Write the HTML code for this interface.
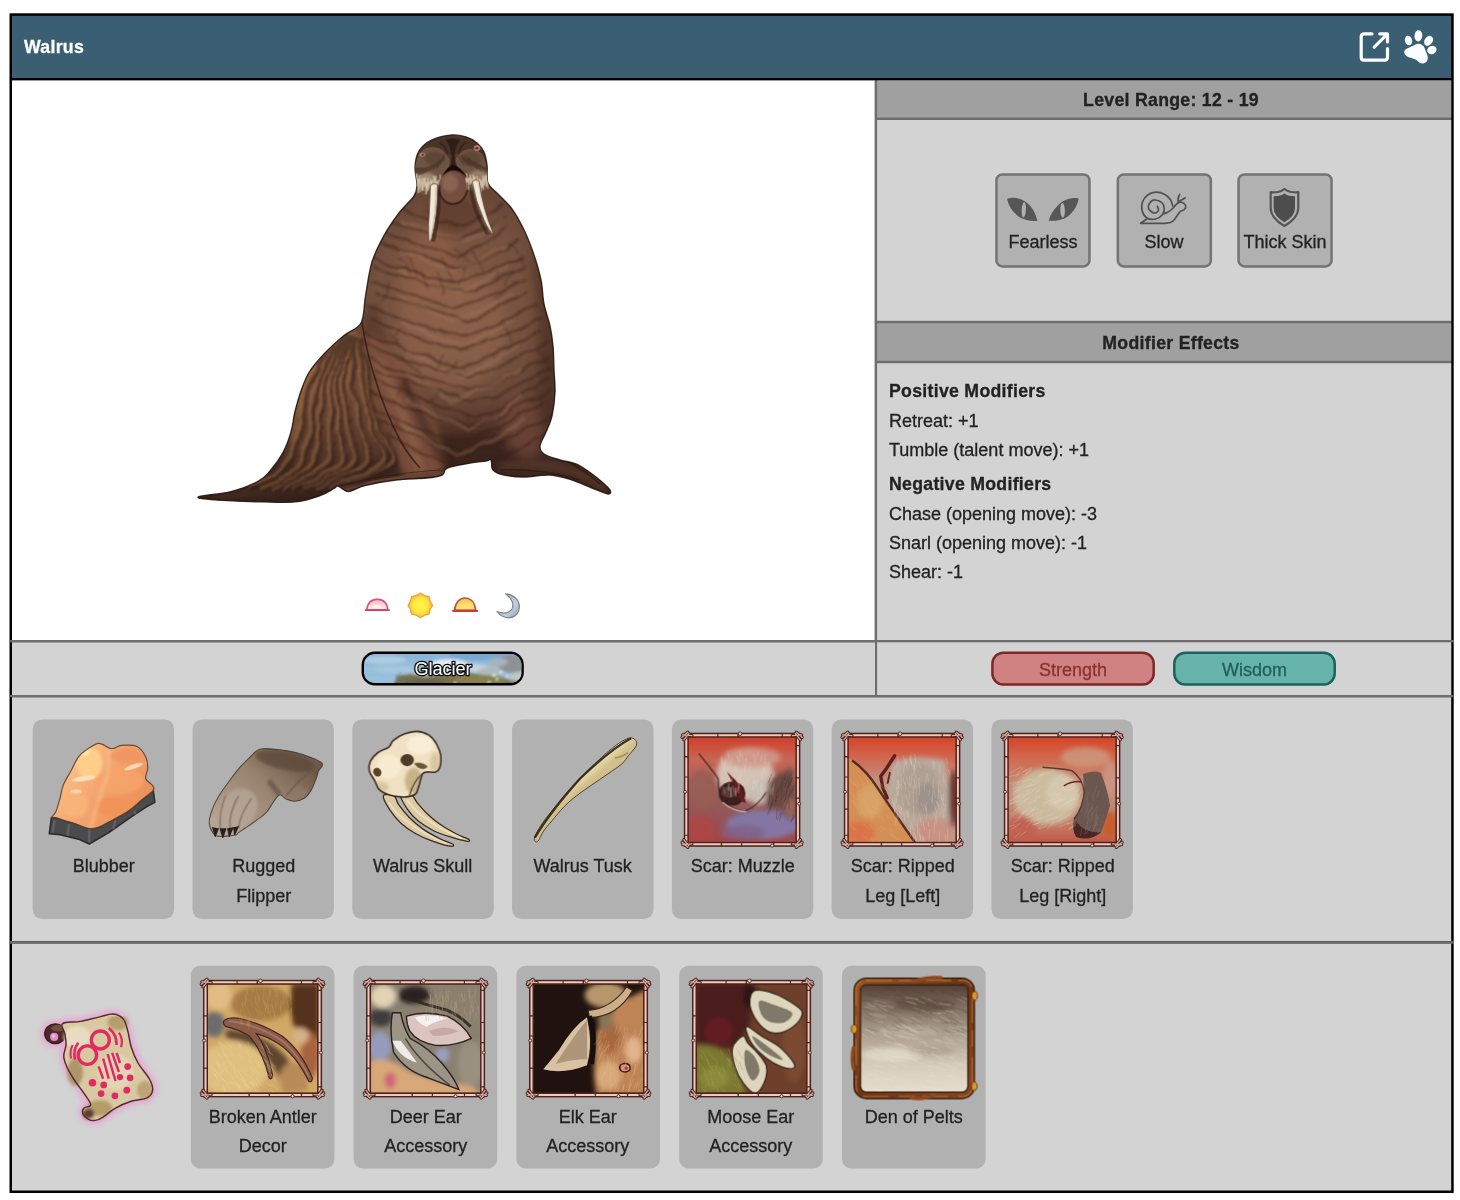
<!DOCTYPE html>
<html>
<head>
<meta charset="utf-8">
<title>Walrus</title>
<style>
html,body{margin:0;padding:0;background:#fff;}
body{width:1460px;height:1200px;position:relative;overflow:hidden;font-family:"Liberation Sans",sans-serif;color:#222;}
#bg{position:absolute;left:0;top:0;width:1460px;height:1200px;}
.t{-webkit-text-stroke:0.3px;will-change:transform;position:absolute;white-space:nowrap;font-size:18px;line-height:22px;margin-top:0.6px;}
.c{text-align:center;}
.b{font-weight:bold;letter-spacing:0.29px;margin-top:0;}
.lbl{-webkit-text-stroke:0.3px;will-change:transform;position:absolute;font-size:18px;line-height:29.5px;text-align:center;color:#222;}
</style>
</head>
<body>
<svg id="bg" width="1460" height="1200" viewBox="0 0 1460 1200">
<defs>
</defs>
<!-- STRUCTURE -->
<rect x="9.5" y="13.3" width="1444.2" height="1179.7" fill="#000"/>
<rect x="12" y="15.8" width="1439.2" height="62.2" fill="#3a5f72"/>
<rect x="12" y="80.4" width="863" height="559.6" fill="#fff"/>
<rect x="874.6" y="80.4" width="576.6" height="614.6" fill="#6e6e6e"/>
<rect x="877.1" y="80.4" width="574.1" height="37.1" fill="#a0a0a0"/>
<rect x="877.1" y="120" width="574.1" height="200.8" fill="#d3d3d3"/>
<rect x="877.1" y="323.2" width="574.1" height="37.6" fill="#a0a0a0"/>
<rect x="877.1" y="363.2" width="574.1" height="276.8" fill="#d3d3d3"/>
<rect x="9.5" y="640" width="1444.2" height="2.3" fill="#6e6e6e"/>
<rect x="12" y="642.3" width="863" height="52.7" fill="#d3d3d3"/>
<rect x="877.1" y="642.3" width="574.1" height="52.7" fill="#d3d3d3"/>
<rect x="9.5" y="695" width="1444.2" height="2.3" fill="#6e6e6e"/>
<rect x="12" y="697.3" width="1439.2" height="243.9" fill="#d3d3d3"/>
<rect x="9.5" y="941.2" width="1444.2" height="2.5" fill="#6e6e6e"/>
<rect x="12" y="943.7" width="1439.2" height="246.8" fill="#d3d3d3"/>
<!-- /STRUCTURE -->
<!-- CARDS -->
<rect x="32.7" y="719.5" width="141.4" height="199.5" rx="9.5" fill="#b1b1b1"/>
<rect x="192.5" y="719.5" width="141.4" height="199.5" rx="9.5" fill="#b1b1b1"/>
<rect x="352.3" y="719.5" width="141.4" height="199.5" rx="9.5" fill="#b1b1b1"/>
<rect x="512.1" y="719.5" width="141.4" height="199.5" rx="9.5" fill="#b1b1b1"/>
<rect x="671.9" y="719.5" width="141.4" height="199.5" rx="9.5" fill="#b1b1b1"/>
<rect x="831.7" y="719.5" width="141.4" height="199.5" rx="9.5" fill="#b1b1b1"/>
<rect x="991.5" y="719.5" width="141.4" height="199.5" rx="9.5" fill="#b1b1b1"/>
<rect x="190.8" y="965.8" width="143.6" height="202.7" rx="9.5" fill="#b1b1b1"/>
<rect x="353.6" y="965.8" width="143.6" height="202.7" rx="9.5" fill="#b1b1b1"/>
<rect x="516.4" y="965.8" width="143.6" height="202.7" rx="9.5" fill="#b1b1b1"/>
<rect x="679.2" y="965.8" width="143.6" height="202.7" rx="9.5" fill="#b1b1b1"/>
<rect x="842.0" y="965.8" width="143.6" height="202.7" rx="9.5" fill="#b1b1b1"/>
<rect x="996.45" y="174.45" width="93" height="92" rx="6" fill="#b1b1b1" stroke="#737373" stroke-width="2.5"/>
<rect x="1117.85" y="174.45" width="93" height="92" rx="6" fill="#b1b1b1" stroke="#737373" stroke-width="2.5"/>
<rect x="1238.55" y="174.45" width="93" height="92" rx="6" fill="#b1b1b1" stroke="#737373" stroke-width="2.5"/>
<rect x="992.4" y="652.7" width="161.3" height="31.9" rx="11" fill="#d08282" stroke="#7e2828" stroke-width="2.5"/>
<rect x="1174.3" y="652.7" width="160.4" height="31.9" rx="11" fill="#66b3ab" stroke="#1d615d" stroke-width="2.5"/>
<!-- /CARDS -->
<!-- ART -->
<!-- walrus -->
<defs>
<radialGradient id="wg" gradientUnits="userSpaceOnUse" cx="455" cy="300" r="150"><stop offset="0" stop-color="#875c48"/><stop offset="0.55" stop-color="#74503e"/><stop offset="1" stop-color="#56382b"/></radialGradient>
<clipPath id="wclip"><path d="M452.0,135.0 C457.7,134.5 461.8,135.7 466.0,137.0 C470.2,138.3 474.0,140.5 477.0,143.0 C480.0,145.5 482.3,148.3 484.0,152.0 C485.7,155.7 486.3,159.8 487.0,165.0 C487.7,170.2 486.2,178.2 488.0,183.0 C489.8,187.8 494.0,189.7 498.0,194.0 C502.0,198.3 507.5,202.7 512.0,209.0 C516.5,215.3 521.3,224.3 525.0,232.0 C528.7,239.7 531.3,247.0 534.0,255.0 C536.7,263.0 539.3,271.8 541.0,280.0 C542.7,288.2 542.5,296.3 544.0,304.0 C545.5,311.7 548.5,319.0 550.0,326.0 C551.5,333.0 552.3,338.7 553.0,346.0 C553.7,353.3 553.7,362.3 554.0,370.0 C554.3,377.7 555.3,384.3 555.0,392.0 C554.7,399.7 553.5,409.3 552.0,416.0 C550.5,422.7 548.0,427.0 546.0,432.0 C544.0,437.0 540.3,442.3 540.0,446.0 C539.7,449.7 540.7,451.7 544.0,454.0 C547.3,456.3 554.7,458.3 560.0,460.0 C565.3,461.7 570.7,461.7 576.0,464.0 C581.3,466.3 587.7,471.0 592.0,474.0 C596.3,477.0 599.0,479.3 602.0,482.0 C605.0,484.7 609.0,488.0 610.0,490.0 C611.0,492.0 611.0,494.3 608.0,494.0 C605.0,493.7 598.0,490.3 592.0,488.0 C586.0,485.7 579.0,482.2 572.0,480.0 C565.0,477.8 558.0,475.5 550.0,475.0 C542.0,474.5 531.7,477.0 524.0,477.0 C516.3,477.0 509.2,476.2 504.0,475.0 C498.8,473.8 495.2,472.5 493.0,470.0 C490.8,467.5 492.2,461.5 491.0,460.0 C489.8,458.5 489.5,460.5 486.0,461.0 C482.5,461.5 476.0,462.0 470.0,463.0 C464.0,464.0 454.2,465.8 450.0,467.0 C445.8,468.2 446.3,468.7 445.0,470.0 C443.7,471.3 445.0,473.7 442.0,475.0 C439.0,476.3 434.7,477.2 427.0,478.0 C419.3,478.8 406.3,478.8 396.0,480.0 C385.7,481.2 372.9,483.6 365.0,485.5 C357.1,487.4 353.0,491.5 348.5,491.6 C344.0,491.7 340.4,486.5 338.0,486.0 C335.6,485.5 337.0,486.9 334.0,488.5 C331.0,490.1 326.5,493.5 320.0,495.7 C313.5,497.9 304.7,500.9 295.0,501.9 C285.3,502.9 275.3,502.2 262.0,501.9 C248.7,501.6 225.6,500.8 215.0,499.9 C204.4,499.0 195.8,498.2 198.5,496.8 C201.2,495.4 221.1,494.2 231.0,491.6 C240.9,489.0 251.5,484.8 258.0,481.4 C264.5,478.0 265.8,475.8 270.0,471.0 C274.2,466.2 279.5,459.1 283.0,452.6 C286.5,446.1 289.0,438.9 291.0,432.0 C293.0,425.1 293.3,418.3 295.0,411.5 C296.7,404.7 298.7,397.5 301.0,391.0 C303.3,384.5 305.2,378.7 309.0,372.5 C312.8,366.3 318.2,360.2 324.0,354.0 C329.8,347.8 337.8,340.7 344.0,335.5 C350.2,330.3 357.4,329.6 361.0,323.0 C364.6,316.4 363.7,306.2 365.5,296.0 C367.3,285.8 368.9,272.1 372.0,262.0 C375.1,251.9 379.5,243.8 384.0,235.6 C388.5,227.4 394.0,219.6 399.0,213.0 C404.0,206.4 411.0,200.7 414.0,196.0 C417.0,191.3 416.8,189.8 417.0,185.0 C417.2,180.2 414.7,172.7 415.0,167.0 C415.3,161.3 416.2,155.5 419.0,151.0 C421.8,146.5 426.5,142.7 432.0,140.0 C437.5,137.3 446.3,135.5 452.0,135.0Z"/></clipPath>
<filter id="wb6" x="-30%" y="-30%" width="160%" height="160%"><feGaussianBlur stdDeviation="6"/></filter>
<filter id="wb3" x="-30%" y="-30%" width="160%" height="160%"><feGaussianBlur stdDeviation="3"/></filter>
<filter id="wb1" x="-30%" y="-30%" width="160%" height="160%"><feGaussianBlur stdDeviation="0.7"/></filter>
<filter id="wdis" x="-10%" y="-10%" width="120%" height="120%"><feTurbulence type="fractalNoise" baseFrequency="0.045" numOctaves="2" seed="3" result="n"/><feDisplacementMap in="SourceGraphic" in2="n" scale="9" xChannelSelector="R" yChannelSelector="G"/><feGaussianBlur stdDeviation="0.95"/></filter>
<linearGradient id="wbot" gradientUnits="userSpaceOnUse" x1="0" y1="395" x2="0" y2="500"><stop offset="0" stop-color="#2e1c15" stop-opacity="0"/><stop offset="0.55" stop-color="#2e1c15" stop-opacity="0.42"/><stop offset="1" stop-color="#2e1c15" stop-opacity="0.82"/></linearGradient>
</defs>
<g id="walrus">
<path d="M452.0,135.0 C457.7,134.5 461.8,135.7 466.0,137.0 C470.2,138.3 474.0,140.5 477.0,143.0 C480.0,145.5 482.3,148.3 484.0,152.0 C485.7,155.7 486.3,159.8 487.0,165.0 C487.7,170.2 486.2,178.2 488.0,183.0 C489.8,187.8 494.0,189.7 498.0,194.0 C502.0,198.3 507.5,202.7 512.0,209.0 C516.5,215.3 521.3,224.3 525.0,232.0 C528.7,239.7 531.3,247.0 534.0,255.0 C536.7,263.0 539.3,271.8 541.0,280.0 C542.7,288.2 542.5,296.3 544.0,304.0 C545.5,311.7 548.5,319.0 550.0,326.0 C551.5,333.0 552.3,338.7 553.0,346.0 C553.7,353.3 553.7,362.3 554.0,370.0 C554.3,377.7 555.3,384.3 555.0,392.0 C554.7,399.7 553.5,409.3 552.0,416.0 C550.5,422.7 548.0,427.0 546.0,432.0 C544.0,437.0 540.3,442.3 540.0,446.0 C539.7,449.7 540.7,451.7 544.0,454.0 C547.3,456.3 554.7,458.3 560.0,460.0 C565.3,461.7 570.7,461.7 576.0,464.0 C581.3,466.3 587.7,471.0 592.0,474.0 C596.3,477.0 599.0,479.3 602.0,482.0 C605.0,484.7 609.0,488.0 610.0,490.0 C611.0,492.0 611.0,494.3 608.0,494.0 C605.0,493.7 598.0,490.3 592.0,488.0 C586.0,485.7 579.0,482.2 572.0,480.0 C565.0,477.8 558.0,475.5 550.0,475.0 C542.0,474.5 531.7,477.0 524.0,477.0 C516.3,477.0 509.2,476.2 504.0,475.0 C498.8,473.8 495.2,472.5 493.0,470.0 C490.8,467.5 492.2,461.5 491.0,460.0 C489.8,458.5 489.5,460.5 486.0,461.0 C482.5,461.5 476.0,462.0 470.0,463.0 C464.0,464.0 454.2,465.8 450.0,467.0 C445.8,468.2 446.3,468.7 445.0,470.0 C443.7,471.3 445.0,473.7 442.0,475.0 C439.0,476.3 434.7,477.2 427.0,478.0 C419.3,478.8 406.3,478.8 396.0,480.0 C385.7,481.2 372.9,483.6 365.0,485.5 C357.1,487.4 353.0,491.5 348.5,491.6 C344.0,491.7 340.4,486.5 338.0,486.0 C335.6,485.5 337.0,486.9 334.0,488.5 C331.0,490.1 326.5,493.5 320.0,495.7 C313.5,497.9 304.7,500.9 295.0,501.9 C285.3,502.9 275.3,502.2 262.0,501.9 C248.7,501.6 225.6,500.8 215.0,499.9 C204.4,499.0 195.8,498.2 198.5,496.8 C201.2,495.4 221.1,494.2 231.0,491.6 C240.9,489.0 251.5,484.8 258.0,481.4 C264.5,478.0 265.8,475.8 270.0,471.0 C274.2,466.2 279.5,459.1 283.0,452.6 C286.5,446.1 289.0,438.9 291.0,432.0 C293.0,425.1 293.3,418.3 295.0,411.5 C296.7,404.7 298.7,397.5 301.0,391.0 C303.3,384.5 305.2,378.7 309.0,372.5 C312.8,366.3 318.2,360.2 324.0,354.0 C329.8,347.8 337.8,340.7 344.0,335.5 C350.2,330.3 357.4,329.6 361.0,323.0 C364.6,316.4 363.7,306.2 365.5,296.0 C367.3,285.8 368.9,272.1 372.0,262.0 C375.1,251.9 379.5,243.8 384.0,235.6 C388.5,227.4 394.0,219.6 399.0,213.0 C404.0,206.4 411.0,200.7 414.0,196.0 C417.0,191.3 416.8,189.8 417.0,185.0 C417.2,180.2 414.7,172.7 415.0,167.0 C415.3,161.3 416.2,155.5 419.0,151.0 C421.8,146.5 426.5,142.7 432.0,140.0 C437.5,137.3 446.3,135.5 452.0,135.0Z" fill="url(#wg)"/>
<g clip-path="url(#wclip)">
<path d="M361.0,323.0 C356.3,318.8 350.2,329.8 344.0,335.0 C337.8,340.2 329.8,347.8 324.0,354.0 C318.2,360.2 312.8,365.8 309.0,372.0 C305.2,378.2 303.3,384.5 301.0,391.0 C298.7,397.5 296.7,404.2 295.0,411.0 C293.3,417.8 293.0,425.2 291.0,432.0 C289.0,438.8 281.5,445.7 283.0,452.0 C284.5,458.3 290.5,467.0 300.0,470.0 C309.5,473.0 326.7,472.5 340.0,470.0 C353.3,467.5 370.8,460.0 380.0,455.0 C389.2,450.0 394.2,449.2 395.0,440.0 C395.8,430.8 388.8,413.3 385.0,400.0 C381.2,386.7 376.0,372.8 372.0,360.0 C368.0,347.2 365.7,327.2 361.0,323.0Z" fill="#6f4a36" filter="url(#wb3)"/>
<rect x="180" y="390" width="450" height="120" fill="url(#wbot)"/>
<ellipse cx="470" cy="455" rx="50" ry="22" fill="#3a241b" opacity="0.8" filter="url(#wb6)"/>
<path d="M530,240 L560,300 L562,400 L548,450 L530,440 L540,390 L538,320 Z" fill="#4a2e22" opacity="0.7" filter="url(#wb6)"/>
<path d="M362,320 L372,360 L384,400 L398,440 L420,470 L440,470 L425,430 L405,395 L390,350 L375,300Z" fill="#4e3024" opacity="0.55" filter="url(#wb3)"/>
<path d="M366,332 L392,345 L418,385 L438,430 L446,464 L438,474 L404,479 L394,446 L380,404 L368,362Z" fill="#80533f" opacity="0.85" filter="url(#wb3)"/>
<path d="M378,360 Q398,400 412,440 Q418,460 420,472" fill="none" stroke="#98694f" stroke-width="9" opacity="0.55" filter="url(#wb3)"/>
<path d="M340,487 Q390,476 444,471 L440,478 Q395,484 350,492Z" fill="#6a4536" opacity="0.9" filter="url(#wb1)"/>
<path d="M403,380 Q420,415 432,440 Q440,452 446,462" fill="none" stroke="#2e1c15" stroke-width="9" opacity="0.55" filter="url(#wb3)"/>
<ellipse cx="522" cy="425" rx="20" ry="34" fill="#73493a" opacity="0.75" filter="url(#wb6)" transform="rotate(-12 522 425)"/>
<path d="M500,466 Q545,462 575,472 Q595,480 606,490" fill="none" stroke="#5d3d31" stroke-width="7" opacity="0.7" filter="url(#wb3)"/>
<path d="M215,497 Q270,490 330,486" fill="none" stroke="#4d3228" stroke-width="6" opacity="0.7" filter="url(#wb3)"/>
<ellipse cx="452" cy="330" rx="55" ry="60" fill="#94684f" opacity="0.5" filter="url(#wb6)"/>
<ellipse cx="425" cy="265" rx="25" ry="45" fill="#96644a" opacity="0.5" filter="url(#wb6)" transform="rotate(20 425 265)"/>
<ellipse cx="452" cy="215" rx="26" ry="18" fill="#5a392c" opacity="0.6" filter="url(#wb3)"/>
<path d="M383.3,205.3 Q429.3,220.1 463.4,225.7 Q479.3,220.7 503.2,203.3 M379.3,218.0 Q426.4,233.1 461.4,239.0 Q479.2,233.8 505.1,216.0 M377.5,229.3 Q422.0,247.5 454.4,255.8 Q476.9,248.4 507.4,227.3 M382.5,242.4 Q428.0,260.3 461.5,268.3 Q486.1,261.2 518.8,240.4 M371.6,257.9 Q419.8,275.4 456.0,283.2 Q485.1,276.3 522.3,255.9 M373.7,267.0 Q426.3,284.5 466.8,292.2 Q491.7,285.3 524.5,265.0 M372.5,281.6 Q419.7,299.2 454.9,307.1 Q486.0,300.1 525.2,279.6 M375.4,292.3 Q427.6,311.2 467.9,320.2 Q493.4,312.2 526.9,290.3 M368.6,305.8 Q420.4,326.5 460.2,336.9 Q494.2,327.7 536.1,303.8 M370.6,318.8 Q422.2,340.1 461.8,351.0 Q497.5,341.3 541.3,316.8 M364.1,332.9 Q417.6,354.8 459.1,366.2 Q495.1,356.1 539.2,330.9 M362.7,343.5 Q422.1,365.8 469.6,377.5 Q503.8,367.1 546.0,341.5 M366.4,357.5 Q424.3,379.8 470.3,391.5 Q506.0,381.1 549.7,355.5 M374.0,368.3 Q429.3,390.7 472.7,402.4 Q509.0,392.0 553.2,366.3 M372.4,379.2 Q430.7,403.7 476.9,417.2 Q509.0,405.2 549.1,377.2 M368.9,392.6 Q424.8,414.4 468.8,425.7 Q505.1,415.7 549.4,390.6 M366.2,404.7 Q419.7,429.4 461.3,443.0 Q497.1,430.9 540.8,402.7 M371.4,417.5 Q426.4,440.4 469.5,452.6 Q506.8,441.7 552.2,415.5 M380.1,431.2 Q429.0,457.2 465.9,471.9 Q504.7,458.8 551.5,429.2" fill="none" stroke="#35201a" stroke-width="2.3" opacity="0.5" filter="url(#wdis)"/>
<path d="M400.4,221.5 Q440.0,234.1 467.7,241.1 Q481.3,234.8 502.9,217.5 M397.3,249.7 Q431.4,263.3 453.5,271.1 Q475.9,264.1 506.2,245.7 M398.5,270.4 Q435.1,284.6 459.7,293.0 Q480.1,285.5 508.6,266.4 M398.9,297.5 Q430.5,312.7 450.1,321.8 Q476.9,313.7 511.7,293.5 M400.5,321.5 Q436.9,337.5 461.3,347.2 Q483.9,338.5 514.5,317.5 M405.4,349.7 Q438.8,366.6 460.3,377.2 Q485.0,367.8 517.7,345.7 M405.1,372.7 Q434.1,390.4 451.1,401.6 Q481.7,391.6 520.4,368.7 M406.7,399.4 Q443.1,418.0 467.5,429.9 Q491.5,419.3 523.5,395.4 M400.9,423.8 Q435.4,443.2 458.0,455.8 Q488.1,444.6 526.3,419.8" fill="none" stroke="#a67a60" stroke-width="4" opacity="0.3" filter="url(#wdis)"/>
<path d="M401.0,355.0 q12.9,9.7 19.8,19.4 M453.3,247.5 q10.5,6.8 14.9,13.6 M468.2,419.5 q8.1,4.6 10.3,9.1 M443.3,355.1 q-2.0,7.8 -10.0,15.6 M402.9,325.1 q-2.2,5.9 -10.3,11.7 M407.3,378.7 q-2.6,9.7 -11.2,19.5 M465.0,267.1 q-0.7,9.2 -7.5,18.3 M389.2,333.3 q7.1,6.1 8.2,12.2 M441.8,259.2 q8.3,10.8 10.6,21.5 M436.1,270.7 q7.2,11.6 8.4,23.2 M499.7,271.5 q-0.3,4.1 -6.5,8.2 M389.3,282.3 q-1.1,9.6 -8.3,19.2 M438.4,390.8 q-2.4,6.3 -10.8,12.5 M419.2,271.5 q7.8,8.0 9.5,16.1 M537.7,350.1 q9.8,8.5 13.7,16.9 M508.9,242.4 q8.8,10.5 11.7,21.1 M501.3,323.0 q8.1,9.4 10.2,18.8 M398.4,419.0 q-4.7,8.8 -15.3,17.7 M398.2,257.6 q9.3,8.2 12.6,16.3 M457.1,359.5 q-2.8,5.7 -11.6,11.5 M470.0,251.9 q9.0,9.8 12.1,19.7 M400.9,378.6 q9.1,11.3 12.3,22.6 M513.1,268.3 q-0.8,8.7 -7.7,17.4 M503.4,291.8 q-1.2,3.6 -8.4,7.2 M499.7,409.0 q-6.8,8.4 -19.6,16.8 M405.3,256.1 q9.0,10.4 11.9,20.8" fill="none" stroke="#3a2219" stroke-width="1.1" opacity="0.5" filter="url(#wdis)"/>
<path d="M352,332 Q322,352 306,380 Q296,410 292,440" fill="none" stroke="#a9784c" stroke-width="8" opacity="0.45" filter="url(#wb3)"/>
<path d="M345.4,335.3 C342.5,338.4 332.8,347.8 327.8,353.8 C322.9,359.8 319.1,365.3 315.8,371.4 C312.5,377.4 310.2,383.8 308.1,390.3 C306.1,396.7 304.4,403.4 303.4,410.3 C302.4,417.1 303.2,424.3 301.9,431.2 C300.6,438.0 298.8,444.3 295.6,451.2 C292.4,458.0 290.2,465.6 282.7,472.3 C275.2,478.9 255.9,487.8 250.6,490.9 M347.8,335.7 C345.2,338.6 336.8,347.7 332.5,353.6 C328.2,359.4 324.3,364.7 321.8,370.7 C319.3,376.7 318.7,383.0 317.3,389.5 C315.9,395.9 313.9,402.7 313.3,409.5 C312.7,416.3 314.6,423.4 313.7,430.2 C312.8,437.0 310.8,443.4 308.2,450.2 C305.6,457.1 305.7,464.7 298.3,471.5 C291.0,478.2 269.7,487.6 263.9,490.8 M349.7,335.9 C347.6,338.8 340.7,347.7 337.1,353.4 C333.6,359.1 330.7,364.3 328.5,370.2 C326.3,376.1 325.1,382.4 323.9,388.9 C322.7,395.3 321.8,402.1 321.4,408.9 C321.0,415.6 321.8,422.8 321.6,429.6 C321.4,436.3 321.7,442.7 320.1,449.6 C318.4,456.4 319.3,464.0 311.6,470.9 C303.9,477.7 280.0,487.4 273.7,490.7 M352.3,336.3 C350.6,339.1 344.8,347.6 341.9,353.2 C339.0,358.7 336.4,363.7 334.8,369.5 C333.2,375.3 332.5,381.6 332.1,388.1 C331.7,394.5 332.2,401.3 332.3,408.1 C332.4,414.8 332.8,421.9 332.8,428.6 C332.8,435.4 333.4,441.7 332.4,448.6 C331.3,455.5 334.2,463.1 326.4,470.1 C318.5,477.1 292.0,487.2 285.1,490.6 M354.6,336.5 C353.1,339.3 348.2,347.6 345.8,353.0 C343.5,358.4 341.5,363.2 340.4,368.9 C339.2,374.7 338.8,381.0 338.8,387.4 C338.8,393.8 339.5,400.7 340.2,407.4 C340.8,414.2 342.3,421.1 342.9,427.9 C343.4,434.6 343.7,441.0 343.3,447.9 C343.0,454.8 348.6,462.3 340.7,469.4 C332.8,476.5 303.4,487.0 295.9,490.5 M356.6,336.8 C355.7,339.5 352.8,347.5 351.1,352.8 C349.5,358.0 347.3,362.7 346.5,368.3 C345.7,374.0 346.2,380.3 346.5,386.7 C346.8,393.1 347.5,400.0 348.3,406.7 C349.0,413.5 349.9,420.4 351.0,427.1 C352.2,433.9 354.8,440.2 355.1,447.1 C355.4,454.1 360.8,461.5 352.9,468.7 C344.9,476.0 314.9,486.8 307.3,490.4 M358.2,337.1 C357.6,339.7 354.8,347.5 354.1,352.6 C353.4,357.7 354.1,362.2 354.0,367.7 C353.8,373.3 352.8,379.6 353.5,386.0 C354.2,392.4 357.0,399.3 358.3,406.0 C359.7,412.7 359.8,419.6 361.5,426.3 C363.1,433.0 367.4,439.4 368.3,446.3 C369.1,453.3 374.9,460.7 366.6,468.0 C358.3,475.4 326.5,486.6 318.5,490.3 M360.9,337.5 C360.7,339.9 360.0,347.4 359.9,352.4 C359.9,357.3 360.1,361.6 360.6,367.1 C361.1,372.6 361.6,378.9 362.9,385.3 C364.1,391.6 366.4,398.6 368.1,405.3 C369.7,412.0 370.7,418.7 372.8,425.4 C374.9,432.1 379.0,438.5 380.7,445.4 C382.4,452.4 391.1,459.8 382.9,467.3 C374.7,474.7 340.1,486.4 331.5,490.2 M362.4,337.7 C362.3,340.1 361.3,347.4 361.7,352.2 C362.1,357.0 364.1,361.2 365.1,366.7 C366.0,372.1 366.2,378.4 367.4,384.8 C368.6,391.1 370.5,398.1 372.5,404.8 C374.5,411.4 376.6,418.2 379.3,424.9 C382.0,431.6 386.3,437.9 388.6,444.9 C390.9,451.9 401.3,459.2 393.0,466.8 C384.8,474.3 348.1,486.2 339.1,490.1" fill="none" stroke="#a9764f" stroke-width="4.6" opacity="0.4" filter="url(#wdis)" transform="translate(-2.8,-3)"/>
<path d="M345.4,335.3 C342.5,338.4 332.8,347.8 327.8,353.8 C322.9,359.8 319.1,365.3 315.8,371.4 C312.5,377.4 310.2,383.8 308.1,390.3 C306.1,396.7 304.4,403.4 303.4,410.3 C302.4,417.1 303.2,424.3 301.9,431.2 C300.6,438.0 298.8,444.3 295.6,451.2 C292.4,458.0 290.2,465.6 282.7,472.3 C275.2,478.9 255.9,487.8 250.6,490.9 M347.8,335.7 C345.2,338.6 336.8,347.7 332.5,353.6 C328.2,359.4 324.3,364.7 321.8,370.7 C319.3,376.7 318.7,383.0 317.3,389.5 C315.9,395.9 313.9,402.7 313.3,409.5 C312.7,416.3 314.6,423.4 313.7,430.2 C312.8,437.0 310.8,443.4 308.2,450.2 C305.6,457.1 305.7,464.7 298.3,471.5 C291.0,478.2 269.7,487.6 263.9,490.8 M349.7,335.9 C347.6,338.8 340.7,347.7 337.1,353.4 C333.6,359.1 330.7,364.3 328.5,370.2 C326.3,376.1 325.1,382.4 323.9,388.9 C322.7,395.3 321.8,402.1 321.4,408.9 C321.0,415.6 321.8,422.8 321.6,429.6 C321.4,436.3 321.7,442.7 320.1,449.6 C318.4,456.4 319.3,464.0 311.6,470.9 C303.9,477.7 280.0,487.4 273.7,490.7 M352.3,336.3 C350.6,339.1 344.8,347.6 341.9,353.2 C339.0,358.7 336.4,363.7 334.8,369.5 C333.2,375.3 332.5,381.6 332.1,388.1 C331.7,394.5 332.2,401.3 332.3,408.1 C332.4,414.8 332.8,421.9 332.8,428.6 C332.8,435.4 333.4,441.7 332.4,448.6 C331.3,455.5 334.2,463.1 326.4,470.1 C318.5,477.1 292.0,487.2 285.1,490.6 M354.6,336.5 C353.1,339.3 348.2,347.6 345.8,353.0 C343.5,358.4 341.5,363.2 340.4,368.9 C339.2,374.7 338.8,381.0 338.8,387.4 C338.8,393.8 339.5,400.7 340.2,407.4 C340.8,414.2 342.3,421.1 342.9,427.9 C343.4,434.6 343.7,441.0 343.3,447.9 C343.0,454.8 348.6,462.3 340.7,469.4 C332.8,476.5 303.4,487.0 295.9,490.5 M356.6,336.8 C355.7,339.5 352.8,347.5 351.1,352.8 C349.5,358.0 347.3,362.7 346.5,368.3 C345.7,374.0 346.2,380.3 346.5,386.7 C346.8,393.1 347.5,400.0 348.3,406.7 C349.0,413.5 349.9,420.4 351.0,427.1 C352.2,433.9 354.8,440.2 355.1,447.1 C355.4,454.1 360.8,461.5 352.9,468.7 C344.9,476.0 314.9,486.8 307.3,490.4 M358.2,337.1 C357.6,339.7 354.8,347.5 354.1,352.6 C353.4,357.7 354.1,362.2 354.0,367.7 C353.8,373.3 352.8,379.6 353.5,386.0 C354.2,392.4 357.0,399.3 358.3,406.0 C359.7,412.7 359.8,419.6 361.5,426.3 C363.1,433.0 367.4,439.4 368.3,446.3 C369.1,453.3 374.9,460.7 366.6,468.0 C358.3,475.4 326.5,486.6 318.5,490.3 M360.9,337.5 C360.7,339.9 360.0,347.4 359.9,352.4 C359.9,357.3 360.1,361.6 360.6,367.1 C361.1,372.6 361.6,378.9 362.9,385.3 C364.1,391.6 366.4,398.6 368.1,405.3 C369.7,412.0 370.7,418.7 372.8,425.4 C374.9,432.1 379.0,438.5 380.7,445.4 C382.4,452.4 391.1,459.8 382.9,467.3 C374.7,474.7 340.1,486.4 331.5,490.2 M362.4,337.7 C362.3,340.1 361.3,347.4 361.7,352.2 C362.1,357.0 364.1,361.2 365.1,366.7 C366.0,372.1 366.2,378.4 367.4,384.8 C368.6,391.1 370.5,398.1 372.5,404.8 C374.5,411.4 376.6,418.2 379.3,424.9 C382.0,431.6 386.3,437.9 388.6,444.9 C390.9,451.9 401.3,459.2 393.0,466.8 C384.8,474.3 348.1,486.2 339.1,490.1" fill="none" stroke="#2c1a14" stroke-width="3" opacity="0.55" filter="url(#wdis)"/>
<path d="M362,322 Q366,350 374,375 Q384,410 400,440 Q408,455 420,468" fill="none" stroke="#2a1912" stroke-width="1.6" opacity="0.75" filter="url(#wb1)"/>
<path d="M340,486 Q380,474 440,470 M350,490 Q390,480 430,477 M545,452 Q575,462 600,484 M500,470 Q540,468 580,480" fill="none" stroke="#24150f" stroke-width="1.2" opacity="0.6" filter="url(#wb1)"/>
</g>
<path d="M452.0,135.0 C457.7,134.5 461.8,135.7 466.0,137.0 C470.2,138.3 474.0,140.5 477.0,143.0 C480.0,145.5 482.3,148.3 484.0,152.0 C485.7,155.7 486.3,159.8 487.0,165.0 C487.7,170.2 486.2,178.2 488.0,183.0 C489.8,187.8 494.0,189.7 498.0,194.0 C502.0,198.3 507.5,202.7 512.0,209.0 C516.5,215.3 521.3,224.3 525.0,232.0 C528.7,239.7 531.3,247.0 534.0,255.0 C536.7,263.0 539.3,271.8 541.0,280.0 C542.7,288.2 542.5,296.3 544.0,304.0 C545.5,311.7 548.5,319.0 550.0,326.0 C551.5,333.0 552.3,338.7 553.0,346.0 C553.7,353.3 553.7,362.3 554.0,370.0 C554.3,377.7 555.3,384.3 555.0,392.0 C554.7,399.7 553.5,409.3 552.0,416.0 C550.5,422.7 548.0,427.0 546.0,432.0 C544.0,437.0 540.3,442.3 540.0,446.0 C539.7,449.7 540.7,451.7 544.0,454.0 C547.3,456.3 554.7,458.3 560.0,460.0 C565.3,461.7 570.7,461.7 576.0,464.0 C581.3,466.3 587.7,471.0 592.0,474.0 C596.3,477.0 599.0,479.3 602.0,482.0 C605.0,484.7 609.0,488.0 610.0,490.0 C611.0,492.0 611.0,494.3 608.0,494.0 C605.0,493.7 598.0,490.3 592.0,488.0 C586.0,485.7 579.0,482.2 572.0,480.0 C565.0,477.8 558.0,475.5 550.0,475.0 C542.0,474.5 531.7,477.0 524.0,477.0 C516.3,477.0 509.2,476.2 504.0,475.0 C498.8,473.8 495.2,472.5 493.0,470.0 C490.8,467.5 492.2,461.5 491.0,460.0 C489.8,458.5 489.5,460.5 486.0,461.0 C482.5,461.5 476.0,462.0 470.0,463.0 C464.0,464.0 454.2,465.8 450.0,467.0 C445.8,468.2 446.3,468.7 445.0,470.0 C443.7,471.3 445.0,473.7 442.0,475.0 C439.0,476.3 434.7,477.2 427.0,478.0 C419.3,478.8 406.3,478.8 396.0,480.0 C385.7,481.2 372.9,483.6 365.0,485.5 C357.1,487.4 353.0,491.5 348.5,491.6 C344.0,491.7 340.4,486.5 338.0,486.0 C335.6,485.5 337.0,486.9 334.0,488.5 C331.0,490.1 326.5,493.5 320.0,495.7 C313.5,497.9 304.7,500.9 295.0,501.9 C285.3,502.9 275.3,502.2 262.0,501.9 C248.7,501.6 225.6,500.8 215.0,499.9 C204.4,499.0 195.8,498.2 198.5,496.8 C201.2,495.4 221.1,494.2 231.0,491.6 C240.9,489.0 251.5,484.8 258.0,481.4 C264.5,478.0 265.8,475.8 270.0,471.0 C274.2,466.2 279.5,459.1 283.0,452.6 C286.5,446.1 289.0,438.9 291.0,432.0 C293.0,425.1 293.3,418.3 295.0,411.5 C296.7,404.7 298.7,397.5 301.0,391.0 C303.3,384.5 305.2,378.7 309.0,372.5 C312.8,366.3 318.2,360.2 324.0,354.0 C329.8,347.8 337.8,340.7 344.0,335.5 C350.2,330.3 357.4,329.6 361.0,323.0 C364.6,316.4 363.7,306.2 365.5,296.0 C367.3,285.8 368.9,272.1 372.0,262.0 C375.1,251.9 379.5,243.8 384.0,235.6 C388.5,227.4 394.0,219.6 399.0,213.0 C404.0,206.4 411.0,200.7 414.0,196.0 C417.0,191.3 416.8,189.8 417.0,185.0 C417.2,180.2 414.7,172.7 415.0,167.0 C415.3,161.3 416.2,155.5 419.0,151.0 C421.8,146.5 426.5,142.7 432.0,140.0 C437.5,137.3 446.3,135.5 452.0,135.0Z" fill="none" stroke="#23150e" stroke-width="1.4" opacity="0.85"/>
<g clip-path="url(#wclip)"><g transform="translate(380,120) scale(0.11667)">
<defs><filter id="hb1" x="-30%" y="-30%" width="160%" height="160%"><feGaussianBlur stdDeviation="5"/></filter><filter id="hb2" x="-30%" y="-30%" width="160%" height="160%"><feGaussianBlur stdDeviation="12"/></filter></defs>
<path d="M340,300 Q400,190 520,150 Q620,125 730,160 Q850,200 900,320 Q860,280 780,250 Q700,240 650,300 L590,300 Q540,230 440,230 Q370,250 340,300Z" fill="#4a3327" filter="url(#hb1)"/>
<path d="M590.0,330.0 C578.3,306.7 548.3,265.8 520.0,250.0 C491.7,234.2 448.3,230.8 420.0,235.0 C391.7,239.2 368.0,255.8 350.0,275.0 C332.0,294.2 320.3,324.2 312.0,350.0 C303.7,375.8 300.7,401.7 300.0,430.0 C299.3,458.3 302.2,491.7 308.0,520.0 C313.8,548.3 323.0,580.0 335.0,600.0 C347.0,620.0 364.2,645.0 380.0,640.0 C395.8,635.0 410.0,588.3 430.0,570.0 C450.0,551.7 478.3,550.0 500.0,530.0 C521.7,510.0 545.0,473.3 560.0,450.0 C575.0,426.7 585.0,410.0 590.0,390.0 C595.0,370.0 601.7,353.3 590.0,330.0Z" fill="#6f5443"/>
<path d="M650.0,330.0 C661.7,309.5 695.0,275.3 720.0,262.0 C745.0,248.7 775.0,245.3 800.0,250.0 C825.0,254.7 853.0,271.7 870.0,290.0 C887.0,308.3 893.3,331.7 902.0,360.0 C910.7,388.3 917.0,430.0 922.0,460.0 C927.0,490.0 934.8,516.7 932.0,540.0 C929.2,563.3 917.0,595.8 905.0,600.0 C893.0,604.2 877.5,577.5 860.0,565.0 C842.5,552.5 820.0,540.0 800.0,525.0 C780.0,510.0 760.0,491.7 740.0,475.0 C720.0,458.3 695.0,440.0 680.0,425.0 C665.0,410.0 655.0,400.8 650.0,385.0 C645.0,369.2 638.3,350.5 650.0,330.0Z" fill="#6f5443"/>
<g filter="url(#hb2)"><ellipse cx="400" cy="520" rx="90" ry="70" fill="#a58d74" opacity="0.9"/><ellipse cx="840" cy="500" rx="90" ry="70" fill="#9c8169" opacity="0.9"/><ellipse cx="470" cy="330" rx="90" ry="60" fill="#5a4133" opacity="0.8"/><ellipse cx="780" cy="330" rx="90" ry="60" fill="#5a4133" opacity="0.8"/></g>
<path d="M555,289l-51,97M549,324l-40,47M546,336l-55,49M526,346l-61,62M517,342l-54,50M520,368l-38,48M505,376l-54,48M495,375l-74,56M487,389l-66,37M472,377l-79,68M473,380l-99,46M466,383l-91,51M448,389l-71,35M441,421l-85,41M422,402l-53,29M419,410l-74,19M403,430l-62,30M400,408l-86,36M389,431l-92,41M378,427l-72,21M379,412l-102,9M360,437l-89,9M363,431l-73,11M351,413l-96,2M339,420l-85,1M338,428l-101,2M670,306l48,82M698,309l43,45M701,323l53,63M699,300l45,56M712,318l79,71M734,312l64,73M735,338l43,57M750,326l55,62M761,326l46,58M754,347l71,56M769,353l64,65M774,352l83,71M782,349l74,61M795,361l80,75M810,362l72,42M814,359l89,64M837,373l79,71M828,369l58,45M843,390l61,42M847,387l89,53M862,386l75,57M871,408l70,36M875,401l70,32M890,424l57,21M906,408l76,24M917,407l84,50" stroke="#3c2a20" stroke-width="9" fill="none" opacity="0.55" stroke-linecap="round"/>
<path d="M307,467l-13,103M315,463l7,92M322,504l3,91M329,508l-5,114M341,478l-12,117M349,507l-11,113M359,529l-2,79M367,495l-8,107M378,506l-9,94M387,493l0,74M395,539l-2,93M403,534l-5,97M411,496l-2,86M421,533l-10,71M433,505l2,81M439,525l-3,99M448,519l-2,110M460,482l6,89M468,500l-7,111M479,480l-5,108M487,528l-3,74M497,524l-2,93M503,513l-9,78M515,471l4,105M737,495l-4,105M741,459l7,72M754,504l8,94M762,497l-4,84M774,472l-0,106M777,492l16,83M788,510l-1,94M798,472l3,99M804,484l13,99M813,488l3,87M825,515l10,86M833,483l0,108M840,511l-2,104M850,506l-0,110M859,511l7,110M870,523l-5,97M882,477l-5,97M887,506l-2,90M898,484l-4,74M904,475l8,94M915,478l10,108M927,481l-4,74" stroke="#d9c9b0" stroke-width="10" fill="none" opacity="0.85" stroke-linecap="round"/>
<path d="M560,170 Q600,200 610,300 Q615,360 600,400 L660,400 Q640,360 640,300 Q650,200 690,170 Q620,150 560,170Z" fill="#2c1d17" opacity="0.85" filter="url(#hb1)"/>
<path d="M510,190 Q560,230 580,290 M730,190 Q690,230 670,290" stroke="#2c1d17" stroke-width="16" fill="none" opacity="0.6" filter="url(#hb1)"/>
<path d="M530,490 Q570,400 625,385 Q690,395 750,500 Q690,430 625,430 Q575,430 530,490Z" fill="#160c08"/>
<ellipse cx="622" cy="575" rx="118" ry="135" fill="#764e40"/>
<ellipse cx="600" cy="540" rx="70" ry="75" fill="#916857" opacity="0.85" filter="url(#hb2)"/>
<path d="M500,600 Q540,720 625,722 Q720,715 750,600" fill="none" stroke="#33201a" stroke-width="16" opacity="0.8" filter="url(#hb1)"/>
<ellipse cx="362" cy="298" rx="24" ry="17" fill="#b9877a"/><circle cx="366" cy="298" r="9" fill="#2a1510"/>
<ellipse cx="832" cy="240" rx="26" ry="24" fill="#c98a88"/><circle cx="830" cy="242" r="11" fill="#3a1a18"/>
<path d="M495,560 Q500,800 440,1040 L470,1040 Q530,800 520,560Z" fill="#2e1c15" opacity="0.6" filter="url(#hb1)"/>
<path d="M790,540 Q800,760 940,980 L905,980 Q770,760 765,560Z" fill="#2e1c15" opacity="0.55" filter="url(#hb1)"/>
<path d="M432,560 Q460,535 492,552 Q498,800 442,1010 Q430,1045 418,1042 Q410,900 424,740 Q428,640 432,560Z" fill="#f1e8d8" stroke="#5a4030" stroke-width="7"/>
<path d="M790,528 Q818,505 846,520 Q880,760 975,985 Q930,950 888,850 Q815,690 790,528Z" fill="#f1e8d8" stroke="#5a4030" stroke-width="7"/>
<path d="M478,580 Q482,800 436,1000" stroke="#c9b79c" stroke-width="10" fill="none" opacity="0.8"/>
</g></g>
</g>
<!-- header_icons -->
<g id="hdricons" fill="none" stroke="#fdfeff" stroke-width="3.2" stroke-linecap="round" stroke-linejoin="round">
<path d="M1372,33.9 H1364.2 Q1361.2,33.9 1361.2,36.9 V57.2 Q1361.2,60.2 1364.2,60.2 H1384.5 Q1387.5,60.2 1387.5,57.2 V48.7"/>
<path d="M1374.2,47.2 L1387.3,34.1 M1379.8,33.9 H1387.5 V42"/>
</g>
<g id="paw" fill="#fdfeff">
<ellipse cx="1408.5" cy="40.5" rx="3.6" ry="4.9" transform="rotate(-15 1408.5 40.5)"/>
<ellipse cx="1418.4" cy="35.8" rx="3.9" ry="5.6" transform="rotate(5 1418.4 35.8)"/>
<ellipse cx="1428.6" cy="40.8" rx="4" ry="5.4" transform="rotate(35 1428.6 40.8)"/>
<ellipse cx="1431.9" cy="50" rx="4.8" ry="4" transform="rotate(-25 1431.9 50)"/>
<path d="M1418.4,43.7 C1416.4,43.8 1413.7,45.5 1411.5,46.5 C1409.3,47.5 1406.7,48.4 1405.5,49.5 C1404.3,50.6 1404.1,51.8 1404.4,53.0 C1404.7,54.2 1405.9,55.7 1407.2,56.6 C1408.5,57.5 1410.5,57.6 1412.0,58.2 C1413.5,58.8 1415.2,59.2 1416.5,60.0 C1417.8,60.8 1418.8,62.5 1420.0,63.0 C1421.2,63.5 1422.8,63.7 1424.0,63.3 C1425.2,62.9 1426.7,61.7 1427.3,60.5 C1427.9,59.3 1427.8,57.5 1427.6,56.0 C1427.3,54.5 1426.5,53.0 1425.8,51.3 C1425.1,49.6 1424.6,47.3 1423.4,46.0 C1422.2,44.7 1420.4,43.6 1418.4,43.7Z"/>
</g>
<!-- time_icons -->
<defs>
<linearGradient id="dawnG" x1="0" y1="0" x2="0" y2="1"><stop offset="0" stop-color="#f7a8ba"/><stop offset="0.6" stop-color="#fde0dc"/><stop offset="1" stop-color="#fff3e2"/></linearGradient>
<radialGradient id="sunG" cx="0.5" cy="0.5" r="0.5"><stop offset="0" stop-color="#fff64a"/><stop offset="0.6" stop-color="#fde83e"/><stop offset="1" stop-color="#f7b63a"/></radialGradient>
<linearGradient id="duskG" x1="0" y1="0" x2="0" y2="1"><stop offset="0" stop-color="#f9b45e"/><stop offset="0.55" stop-color="#ffdf6e"/><stop offset="1" stop-color="#fde078"/></linearGradient>
<linearGradient id="moonG" x1="0" y1="0" x2="1" y2="1"><stop offset="0" stop-color="#8e99a6"/><stop offset="0.6" stop-color="#c3d0dc"/><stop offset="1" stop-color="#9aa4ae"/></linearGradient>
<filter id="tib" x="-20%" y="-20%" width="140%" height="140%"><feGaussianBlur stdDeviation="0.45"/></filter>
</defs>
<g id="timeicons" filter="url(#tib)">
<path d="M366.8,610 C367.5,603 371.5,599.2 377.3,599.2 C383.2,599.2 387.2,603 387.8,610 Z" fill="url(#dawnG)" stroke="#d84e7a" stroke-width="1.6" stroke-linejoin="round"/>
<path d="M365.6,610.2 H389" stroke="#cf3f6e" stroke-width="1.8" stroke-linecap="round"/>
<ellipse cx="377" cy="606.5" rx="4" ry="1.6" fill="#fffbe8" opacity="0.9"/>
<polygon points="420.3,593.1 424.4,595.6 429.0,596.7 430.1,601.3 432.6,605.4 430.1,609.5 429.0,614.1 424.4,615.2 420.3,617.7 416.2,615.2 411.6,614.1 410.5,609.5 408.0,605.4 410.5,601.3 411.6,596.7 416.2,595.6" fill="url(#sunG)" stroke="#eda23a" stroke-width="1.3" stroke-linejoin="round"/>
<path d="M454.6,610.4 C455.2,602.5 459.5,598 465,598 C470.8,598 475,602.5 475.6,610.4 Z" fill="url(#duskG)" stroke="#b85a3c" stroke-width="1.7" stroke-linejoin="round"/>
<path d="M453.2,610.9 H477" stroke="#c63c40" stroke-width="2.2" stroke-linecap="round"/>
<path d="M505.5,593.8 Q514,594.5 518,601 Q521.5,608.5 516.5,614.5 Q510.5,620 503,616.5 Q499,614.5 497,611.5 Q507,615.5 512,609 Q515.5,601.5 505.5,593.8Z" fill="url(#moonG)" stroke="#7d848c" stroke-width="1.2" stroke-linejoin="round"/>
</g>
<!-- glacier -->
<defs>
<clipPath id="glc"><rect x="364" y="654" width="157.4" height="29" rx="10.8"/></clipPath>
<linearGradient id="glsky" x1="0" y1="0" x2="0" y2="1"><stop offset="0" stop-color="#7fb0d6"/><stop offset="0.5" stop-color="#9cc0dc"/><stop offset="1" stop-color="#8db7d8"/></linearGradient>
<filter id="glb" x="-30%" y="-30%" width="160%" height="160%"><feGaussianBlur stdDeviation="1.6"/></filter>
<filter id="glb2" x="-30%" y="-30%" width="160%" height="160%"><feGaussianBlur stdDeviation="0.8"/></filter>
</defs>
<g id="glacier">
<rect x="361.6" y="651.6" width="162.2" height="33.8" rx="13.2" fill="#000"/>
<g clip-path="url(#glc)">
<rect x="360" y="650" width="166" height="37" fill="url(#glsky)"/>
<g filter="url(#glb)">
<ellipse cx="385" cy="660" rx="22" ry="4" fill="#b7d1e6" opacity="0.8"/>
<ellipse cx="400" cy="670" rx="26" ry="3.5" fill="#a9c8e0" opacity="0.8"/>
<ellipse cx="380" cy="679" rx="20" ry="3" fill="#9dc2df" opacity="0.8"/>
<rect x="450" y="650" width="80" height="10" fill="#6fa3cc" opacity="0.7"/>
<ellipse cx="449" cy="666" rx="20" ry="7" fill="#e3ebf2"/>
<ellipse cx="470" cy="668" rx="18" ry="4" fill="#c9d3dc"/>
<ellipse cx="512" cy="664" rx="14" ry="9" fill="#8e9294"/>
<ellipse cx="498" cy="662" rx="10" ry="4" fill="#a9b2b8"/>
<ellipse cx="490" cy="671" rx="12" ry="3.5" fill="#b5b8b4"/>
<ellipse cx="518" cy="678" rx="9" ry="6" fill="#c2c6c4"/>
<path d="M393,688 L397,676 L410,674 L425,677 L440,675 L455,672 L470,673 L490,676 L510,680 L530,684 L530,690Z" fill="#77704a"/>
<ellipse cx="480" cy="680" rx="26" ry="5" fill="#8a8048"/>
<ellipse cx="425" cy="683" rx="22" ry="4" fill="#676444"/>
</g>
<g filter="url(#glb2)">
<path d="M396,684 l1,-10 M400,684 l0,-12 M404,684 l-1,-9 M409,684 l2,-11 M414,684 l0,-8" stroke="#6f7466" stroke-width="1" opacity="0.7"/>
<circle cx="494" cy="675" r="1.6" fill="#eef0e6"/><circle cx="501" cy="672" r="1.5" fill="#eef0e6"/><circle cx="497" cy="679" r="1.4" fill="#e8ead8"/><circle cx="489" cy="682" r="1.3" fill="#e8ead8"/><circle cx="455" cy="683" r="1.3" fill="#e8ead8"/><circle cx="507" cy="676" r="1.2" fill="#eef0e6"/>
</g>
</g>
<text x="442.9" y="675.1" text-anchor="middle" font-family="Liberation Sans, sans-serif" font-size="18px" fill="#fff" stroke="#000" stroke-width="2.6" stroke-linejoin="round" paint-order="stroke">Glacier</text>
</g>
<!-- traits -->
<defs><filter id="trb" x="-10%" y="-10%" width="120%" height="120%"><feGaussianBlur stdDeviation="0.35"/></filter></defs>
<g id="traits" filter="url(#trb)">
<path d="M1007.1,198.8 C1013,196.8 1021,197.5 1027.7,203.4 C1033,208 1036,214 1037.3,221 C1031,221.3 1023,219.5 1018.5,216.4 C1012,211.8 1008.5,205.5 1007.1,198.8Z" fill="#575757"/>
<path d="M1078.6,198.5 C1072.5,197 1064.5,199 1058.6,204.7 C1053.5,209.5 1050,215 1048.7,220.7 C1055,221.3 1063,219.8 1067.8,216.4 C1074,211.8 1077.6,205 1078.6,198.5Z" fill="#575757"/>
<ellipse cx="1023.8" cy="209.9" rx="2.1" ry="7.6" fill="#b1b1b1" transform="rotate(3 1023.8 209.9)"/>
<ellipse cx="1062.6" cy="210.2" rx="2.3" ry="7.3" fill="#b1b1b1" transform="rotate(-2 1062.6 210.2)"/>
<path d="M1157.3,206.3 C1157.5,207.0 1159.1,209.6 1158.5,210.7 C1157.9,211.8 1155.4,213.4 1153.8,213.0 C1152.1,212.6 1149.1,210.3 1148.6,208.5 C1148.0,206.6 1149.5,203.3 1150.6,201.9 C1151.8,200.5 1153.7,199.8 1155.7,200.0 C1157.6,200.2 1160.8,201.6 1162.3,203.0 C1163.7,204.4 1164.1,206.6 1164.2,208.5 C1164.3,210.4 1164.2,212.5 1162.8,214.2 C1161.4,216.0 1158.3,218.4 1155.7,219.0 C1153.0,219.6 1149.2,219.3 1146.9,217.9 C1144.7,216.5 1142.8,213.4 1142.1,210.7 C1141.4,208.0 1141.5,204.6 1142.5,201.9 C1143.5,199.3 1145.8,196.4 1148.0,194.8 C1150.2,193.2 1152.9,192.3 1155.7,192.2 C1158.4,192.1 1162.0,193.0 1164.5,194.2 C1166.9,195.5 1169.2,197.8 1170.6,199.7 C1172.0,201.7 1172.4,205.0 1172.8,206.0" fill="none" stroke="#515151" stroke-width="1.7" stroke-linecap="round"/>
<path d="M1146.9,219.0 L1140.6,223.3 L1165.5,223.3 L1165.5,223.3 C1166.4,223.1 1169.3,222.9 1170.8,222.3 C1172.2,221.7 1173.2,220.9 1174.3,219.7 C1175.5,218.5 1176.6,216.4 1177.6,215.1 C1178.6,213.7 1179.0,212.6 1180.1,211.7 C1181.2,210.8 1183.2,210.4 1184.2,209.6 C1185.1,208.8 1185.8,207.9 1185.8,206.8 C1185.8,205.8 1185.2,204.3 1184.2,203.6 C1183.2,202.8 1181.2,202.0 1179.8,202.2 C1178.4,202.4 1177.1,203.6 1176.0,204.7 C1174.8,205.7 1174.0,207.2 1172.7,208.5 C1171.3,209.8 1169.3,211.5 1167.7,212.3 C1166.2,213.2 1164.1,213.5 1163.4,213.7" fill="none" stroke="#515151" stroke-width="1.7" stroke-linecap="round" stroke-linejoin="round"/>
<path d="M1178.4,202.2 Q1177.1,198.1 1179.7,194.4" fill="none" stroke="#515151" stroke-width="1.7" stroke-linecap="round"/>
<path d="M1179.0,201.6 L1185.3,197.8" fill="none" stroke="#515151" stroke-width="1.7" stroke-linecap="round"/>
<path d="M1284.4,189 Q1281.5,191.5 1278,192 Q1274,192.5 1270.7,192.2 V208 Q1270.7,218 1284.4,226 Q1298.3,218 1298.3,208 V192.2 Q1295,192.5 1291,192 Q1287.5,191.5 1284.4,189Z" fill="none" stroke="#555" stroke-width="2.2" stroke-linejoin="round"/>
<path d="M1284.4,193.6 Q1282,195.3 1279,195.8 Q1276,196.3 1273.6,196.2 V208 Q1273.6,216 1284.4,222.3 Q1295,216 1295,208 V196.2 Q1292.5,196.3 1289.5,195.8 Q1286.8,195.3 1284.4,193.6Z" fill="#4d4d4d"/>
</g>
<!-- row1_items -->
<defs>
<filter id="r1b1" x="-40%" y="-40%" width="180%" height="180%"><feGaussianBlur stdDeviation="5.539199999999999"/></filter>
<filter id="r1b2" x="-40%" y="-40%" width="180%" height="180%"><feGaussianBlur stdDeviation="14.7712"/></filter>
<filter id="r1b3" x="-40%" y="-40%" width="180%" height="180%"><feGaussianBlur stdDeviation="27.695999999999998"/></filter>
<filter id="r1b05" x="-40%" y="-40%" width="180%" height="180%"><feGaussianBlur stdDeviation="3.2311999999999994"/></filter>
<clipPath id="c1"><path d="M610.0,215.0 C573.3,215.8 531.7,249.2 500.0,270.0 C468.3,290.8 445.0,306.7 420.0,340.0 C395.0,373.3 373.3,426.7 350.0,470.0 C326.7,513.3 296.7,558.3 280.0,600.0 C263.3,641.7 261.7,678.3 250.0,720.0 C238.3,761.7 223.3,820.0 210.0,850.0 C196.7,880.0 170.0,891.7 170.0,900.0 C170.0,908.3 188.3,895.0 210.0,900.0 C231.7,905.0 268.3,920.0 300.0,930.0 C331.7,940.0 365.0,948.3 400.0,960.0 C435.0,971.7 476.7,995.0 510.0,1000.0 C543.3,1005.0 561.7,1003.3 600.0,990.0 C638.3,976.7 693.3,945.0 740.0,920.0 C786.7,895.0 836.7,870.0 880.0,840.0 C923.3,810.0 961.7,771.7 1000.0,740.0 C1038.3,708.3 1093.3,673.3 1110.0,650.0 C1126.7,626.7 1111.7,618.3 1100.0,600.0 C1088.3,581.7 1046.7,566.7 1040.0,540.0 C1033.3,513.3 1060.0,473.3 1060.0,440.0 C1060.0,406.7 1056.7,372.5 1040.0,340.0 C1023.3,307.5 996.7,262.5 960.0,245.0 C923.3,227.5 860.0,231.7 820.0,235.0 C780.0,238.3 755.0,268.3 720.0,265.0 C685.0,261.7 646.7,214.2 610.0,215.0Z"/></clipPath>
<linearGradient id="blubG" gradientUnits="userSpaceOnUse" x1="300" y1="300" x2="1000" y2="800"><stop offset="0" stop-color="#fbc88c"/><stop offset="0.45" stop-color="#f5a872"/><stop offset="1" stop-color="#ec905a"/></linearGradient>
<clipPath id="c2"><path d="M640.0,265.0 C676.7,262.5 748.3,269.2 800.0,275.0 C851.7,280.8 900.0,287.5 950.0,300.0 C1000.0,312.5 1059.2,332.5 1100.0,350.0 C1140.8,367.5 1185.0,385.0 1195.0,405.0 C1205.0,425.0 1170.8,444.2 1160.0,470.0 C1149.2,495.8 1141.7,530.0 1130.0,560.0 C1118.3,590.0 1106.7,623.3 1090.0,650.0 C1073.3,676.7 1055.0,703.3 1030.0,720.0 C1005.0,736.7 968.3,748.3 940.0,750.0 C911.7,751.7 883.3,740.0 860.0,730.0 C836.7,720.0 820.0,685.0 800.0,690.0 C780.0,695.0 760.0,733.3 740.0,760.0 C720.0,786.7 706.7,821.7 680.0,850.0 C653.3,878.3 613.3,905.0 580.0,930.0 C546.7,955.0 506.7,981.7 480.0,1000.0 C453.3,1018.3 433.3,1030.0 420.0,1040.0 C406.7,1050.0 415.0,1055.0 400.0,1060.0 C385.0,1065.0 351.7,1067.5 330.0,1070.0 C308.3,1072.5 291.7,1076.7 270.0,1075.0 C248.3,1073.3 220.0,1080.8 200.0,1060.0 C180.0,1039.2 153.3,990.0 150.0,950.0 C146.7,910.0 165.0,861.7 180.0,820.0 C195.0,778.3 215.0,741.7 240.0,700.0 C265.0,658.3 298.3,613.3 330.0,570.0 C361.7,526.7 398.3,476.7 430.0,440.0 C461.7,403.3 495.0,375.0 520.0,350.0 C545.0,325.0 560.0,304.2 580.0,290.0 C600.0,275.8 603.3,267.5 640.0,265.0Z"/></clipPath>
<linearGradient id="flipG" gradientUnits="userSpaceOnUse" x1="900" y1="300" x2="300" y2="1000"><stop offset="0" stop-color="#6f5a4a"/><stop offset="0.4" stop-color="#97826f"/><stop offset="1" stop-color="#b6a392"/></linearGradient>
<clipPath id="c3"><path d="M590.0,105.0 C628.3,106.7 670.0,120.8 700.0,140.0 C730.0,159.2 751.7,188.3 770.0,220.0 C788.3,251.7 805.0,293.3 810.0,330.0 C815.0,366.7 808.3,415.0 800.0,440.0 C791.7,465.0 780.0,473.3 760.0,480.0 C740.0,486.7 700.0,476.7 680.0,480.0 C660.0,483.3 651.7,480.0 640.0,500.0 C628.3,520.0 620.0,570.0 610.0,600.0 C600.0,630.0 595.0,662.5 580.0,680.0 C565.0,697.5 543.3,700.0 520.0,705.0 C496.7,710.0 471.7,712.5 440.0,710.0 C408.3,707.5 363.3,701.7 330.0,690.0 C296.7,678.3 261.7,661.7 240.0,640.0 C218.3,618.3 215.0,588.3 200.0,560.0 C185.0,531.7 156.7,500.0 150.0,470.0 C143.3,440.0 146.7,408.3 160.0,380.0 C173.3,351.7 201.7,321.7 230.0,300.0 C258.3,278.3 306.7,268.3 330.0,250.0 C353.3,231.7 346.7,210.0 370.0,190.0 C393.3,170.0 433.3,144.2 470.0,130.0 C506.7,115.8 551.7,103.3 590.0,105.0Z"/></clipPath>
<linearGradient id="tuskG" gradientUnits="userSpaceOnUse" x1="500" y1="500" x2="620" y2="640"><stop offset="0" stop-color="#cdb878"/><stop offset="0.45" stop-color="#f0e4b8"/><stop offset="1" stop-color="#d2c08c"/></linearGradient>
</defs>
<g transform="translate(33,720) scale(0.10832)">
<path d="M170,900 L150,1050 L250,1060 L420,1100 L520,1145 L700,1040 L900,900 L1050,800 L1125,760 L1110,650 L1000,740 L880,840 L740,920 L600,990 L510,1000 L400,960 L300,930 L210,900Z" fill="#4b4b4d" stroke="#2a2a2a" stroke-width="14" stroke-linejoin="round"/>
<path d="M200,930 L180,1040 M330,960 L320,1070 M520,1010 L520,1130 M760,930 L740,1010 M930,840 L950,870" stroke="#77777a" stroke-width="22" opacity="0.5" filter="url(#r1b1)"/>
<path d="M610.0,215.0 C573.3,215.8 531.7,249.2 500.0,270.0 C468.3,290.8 445.0,306.7 420.0,340.0 C395.0,373.3 373.3,426.7 350.0,470.0 C326.7,513.3 296.7,558.3 280.0,600.0 C263.3,641.7 261.7,678.3 250.0,720.0 C238.3,761.7 223.3,820.0 210.0,850.0 C196.7,880.0 170.0,891.7 170.0,900.0 C170.0,908.3 188.3,895.0 210.0,900.0 C231.7,905.0 268.3,920.0 300.0,930.0 C331.7,940.0 365.0,948.3 400.0,960.0 C435.0,971.7 476.7,995.0 510.0,1000.0 C543.3,1005.0 561.7,1003.3 600.0,990.0 C638.3,976.7 693.3,945.0 740.0,920.0 C786.7,895.0 836.7,870.0 880.0,840.0 C923.3,810.0 961.7,771.7 1000.0,740.0 C1038.3,708.3 1093.3,673.3 1110.0,650.0 C1126.7,626.7 1111.7,618.3 1100.0,600.0 C1088.3,581.7 1046.7,566.7 1040.0,540.0 C1033.3,513.3 1060.0,473.3 1060.0,440.0 C1060.0,406.7 1056.7,372.5 1040.0,340.0 C1023.3,307.5 996.7,262.5 960.0,245.0 C923.3,227.5 860.0,231.7 820.0,235.0 C780.0,238.3 755.0,268.3 720.0,265.0 C685.0,261.7 646.7,214.2 610.0,215.0Z" fill="url(#blubG)"/>
<g clip-path="url(#c1)">
<g filter="url(#r1b2)">
<ellipse cx="520" cy="400" rx="120" ry="150" fill="#fdd28c" opacity="0.9"/>
<ellipse cx="860" cy="330" rx="140" ry="70" fill="#ef9560" opacity="0.9"/>
<ellipse cx="800" cy="560" rx="220" ry="120" fill="#f5a468" opacity="0.8"/>
<ellipse cx="380" cy="780" rx="130" ry="120" fill="#f8b47a" opacity="0.9"/>
<ellipse cx="760" cy="800" rx="200" ry="90" fill="#ef9356" opacity="0.9"/>
<path d="M700,270 L690,500 L600,750 L530,1000" stroke="#f7b888" stroke-width="40" fill="none" opacity="0.7"/>
</g>
<g filter="url(#r1b1)">
<ellipse cx="470" cy="540" rx="110" ry="22" fill="#fee6c4" opacity="0.9" transform="rotate(-8 470 540)"/>
<ellipse cx="930" cy="430" rx="90" ry="20" fill="#fee0c0" opacity="0.9" transform="rotate(-18 930 430)"/>
<ellipse cx="400" cy="660" rx="50" ry="18" fill="#fee0c0" opacity="0.8"/>
<ellipse cx="480" cy="300" rx="40" ry="30" fill="#ffe9b0" opacity="0.8"/>
</g></g>
<path d="M610.0,215.0 C573.3,215.8 531.7,249.2 500.0,270.0 C468.3,290.8 445.0,306.7 420.0,340.0 C395.0,373.3 373.3,426.7 350.0,470.0 C326.7,513.3 296.7,558.3 280.0,600.0 C263.3,641.7 261.7,678.3 250.0,720.0 C238.3,761.7 223.3,820.0 210.0,850.0 C196.7,880.0 170.0,891.7 170.0,900.0 C170.0,908.3 188.3,895.0 210.0,900.0 C231.7,905.0 268.3,920.0 300.0,930.0 C331.7,940.0 365.0,948.3 400.0,960.0 C435.0,971.7 476.7,995.0 510.0,1000.0 C543.3,1005.0 561.7,1003.3 600.0,990.0 C638.3,976.7 693.3,945.0 740.0,920.0 C786.7,895.0 836.7,870.0 880.0,840.0 C923.3,810.0 961.7,771.7 1000.0,740.0 C1038.3,708.3 1093.3,673.3 1110.0,650.0 C1126.7,626.7 1111.7,618.3 1100.0,600.0 C1088.3,581.7 1046.7,566.7 1040.0,540.0 C1033.3,513.3 1060.0,473.3 1060.0,440.0 C1060.0,406.7 1056.7,372.5 1040.0,340.0 C1023.3,307.5 996.7,262.5 960.0,245.0 C923.3,227.5 860.0,231.7 820.0,235.0 C780.0,238.3 755.0,268.3 720.0,265.0 C685.0,261.7 646.7,214.2 610.0,215.0Z" fill="none" stroke="#5a3a24" stroke-width="11" opacity="0.85"/>
</g>
<g transform="translate(193,720) scale(0.10832)">
<path d="M640.0,265.0 C676.7,262.5 748.3,269.2 800.0,275.0 C851.7,280.8 900.0,287.5 950.0,300.0 C1000.0,312.5 1059.2,332.5 1100.0,350.0 C1140.8,367.5 1185.0,385.0 1195.0,405.0 C1205.0,425.0 1170.8,444.2 1160.0,470.0 C1149.2,495.8 1141.7,530.0 1130.0,560.0 C1118.3,590.0 1106.7,623.3 1090.0,650.0 C1073.3,676.7 1055.0,703.3 1030.0,720.0 C1005.0,736.7 968.3,748.3 940.0,750.0 C911.7,751.7 883.3,740.0 860.0,730.0 C836.7,720.0 820.0,685.0 800.0,690.0 C780.0,695.0 760.0,733.3 740.0,760.0 C720.0,786.7 706.7,821.7 680.0,850.0 C653.3,878.3 613.3,905.0 580.0,930.0 C546.7,955.0 506.7,981.7 480.0,1000.0 C453.3,1018.3 433.3,1030.0 420.0,1040.0 C406.7,1050.0 415.0,1055.0 400.0,1060.0 C385.0,1065.0 351.7,1067.5 330.0,1070.0 C308.3,1072.5 291.7,1076.7 270.0,1075.0 C248.3,1073.3 220.0,1080.8 200.0,1060.0 C180.0,1039.2 153.3,990.0 150.0,950.0 C146.7,910.0 165.0,861.7 180.0,820.0 C195.0,778.3 215.0,741.7 240.0,700.0 C265.0,658.3 298.3,613.3 330.0,570.0 C361.7,526.7 398.3,476.7 430.0,440.0 C461.7,403.3 495.0,375.0 520.0,350.0 C545.0,325.0 560.0,304.2 580.0,290.0 C600.0,275.8 603.3,267.5 640.0,265.0Z" fill="url(#flipG)"/>
<g clip-path="url(#c2)">
<g filter="url(#r1b2)">
<ellipse cx="850" cy="380" rx="280" ry="80" fill="#5f4a3b" opacity="0.8" transform="rotate(12 850 380)"/>
<ellipse cx="960" cy="680" rx="110" ry="60" fill="#8d7868" opacity="0.9"/>
<ellipse cx="420" cy="820" rx="160" ry="200" fill="#b7a595" opacity="0.8" transform="rotate(35 420 820)"/>
<path d="M800,690 L700,560" stroke="#5a4638" stroke-width="50" opacity="0.6"/>
</g>
<g filter="url(#r1b1)">
<path d="M300,700 Q240,850 250,1000 M420,700 Q330,860 340,1000 M540,720 Q430,880 420,1000" stroke="#7f6b5c" stroke-width="16" fill="none" opacity="0.7"/>
<path d="M1150,420 Q1000,520 860,700" stroke="#6b5747" stroke-width="14" fill="none" opacity="0.7"/>
</g>
</g>
<path d="M640.0,265.0 C676.7,262.5 748.3,269.2 800.0,275.0 C851.7,280.8 900.0,287.5 950.0,300.0 C1000.0,312.5 1059.2,332.5 1100.0,350.0 C1140.8,367.5 1185.0,385.0 1195.0,405.0 C1205.0,425.0 1170.8,444.2 1160.0,470.0 C1149.2,495.8 1141.7,530.0 1130.0,560.0 C1118.3,590.0 1106.7,623.3 1090.0,650.0 C1073.3,676.7 1055.0,703.3 1030.0,720.0 C1005.0,736.7 968.3,748.3 940.0,750.0 C911.7,751.7 883.3,740.0 860.0,730.0 C836.7,720.0 820.0,685.0 800.0,690.0 C780.0,695.0 760.0,733.3 740.0,760.0 C720.0,786.7 706.7,821.7 680.0,850.0 C653.3,878.3 613.3,905.0 580.0,930.0 C546.7,955.0 506.7,981.7 480.0,1000.0 C453.3,1018.3 433.3,1030.0 420.0,1040.0 C406.7,1050.0 415.0,1055.0 400.0,1060.0 C385.0,1065.0 351.7,1067.5 330.0,1070.0 C308.3,1072.5 291.7,1076.7 270.0,1075.0 C248.3,1073.3 220.0,1080.8 200.0,1060.0 C180.0,1039.2 153.3,990.0 150.0,950.0 C146.7,910.0 165.0,861.7 180.0,820.0 C195.0,778.3 215.0,741.7 240.0,700.0 C265.0,658.3 298.3,613.3 330.0,570.0 C361.7,526.7 398.3,476.7 430.0,440.0 C461.7,403.3 495.0,375.0 520.0,350.0 C545.0,325.0 560.0,304.2 580.0,290.0 C600.0,275.8 603.3,267.5 640.0,265.0Z" fill="none" stroke="#3f332a" stroke-width="10" opacity="0.8"/>
<path d="M180,990 L205,1075 L235,1000 M250,1000 L275,1085 L305,1000 M320,1000 L335,1075 L370,990 M375,990 L385,1060 L420,980" fill="#262422" stroke="#262422" stroke-width="10" stroke-linejoin="round" filter="url(#r1b05)"/>
</g>
<g transform="translate(353,720) scale(0.10832)">
<path d="M280.0,700.0 C273.3,721.7 313.3,788.3 340.0,830.0 C366.7,871.7 400.0,913.3 440.0,950.0 C480.0,986.7 530.0,1021.7 580.0,1050.0 C630.0,1078.3 686.7,1100.8 740.0,1120.0 C793.3,1139.2 870.0,1160.8 900.0,1165.0 C930.0,1169.2 936.7,1156.7 920.0,1145.0 C903.3,1133.3 845.0,1117.5 800.0,1095.0 C755.0,1072.5 696.7,1042.5 650.0,1010.0 C603.3,977.5 558.3,938.3 520.0,900.0 C481.7,861.7 443.3,813.3 420.0,780.0 C396.7,746.7 403.3,713.3 380.0,700.0 C356.7,686.7 286.7,678.3 280.0,700.0Z" fill="#dccaa4" stroke="#3a2c20" stroke-width="12" stroke-linejoin="round"/>
<path d="M440.0,690.0 C433.3,711.7 473.3,780.0 500.0,820.0 C526.7,860.0 560.0,896.7 600.0,930.0 C640.0,963.3 690.0,995.0 740.0,1020.0 C790.0,1045.0 847.5,1063.3 900.0,1080.0 C952.5,1096.7 1027.5,1116.7 1055.0,1120.0 C1082.5,1123.3 1082.5,1111.7 1065.0,1100.0 C1047.5,1088.3 994.2,1073.3 950.0,1050.0 C905.8,1026.7 845.0,991.7 800.0,960.0 C755.0,928.3 715.0,893.3 680.0,860.0 C645.0,826.7 613.3,788.3 590.0,760.0 C566.7,731.7 565.0,701.7 540.0,690.0 C515.0,678.3 446.7,668.3 440.0,690.0Z" fill="#dccaa4" stroke="#3a2c20" stroke-width="12" stroke-linejoin="round"/>
<path d="M330,760 Q450,960 860,1140" stroke="#f1e4c6" stroke-width="16" fill="none" opacity="0.8" filter="url(#r1b05)"/>
<path d="M500,740 Q640,940 1000,1090" stroke="#f1e4c6" stroke-width="18" fill="none" opacity="0.8" filter="url(#r1b05)"/>
<path d="M590.0,105.0 C628.3,106.7 670.0,120.8 700.0,140.0 C730.0,159.2 751.7,188.3 770.0,220.0 C788.3,251.7 805.0,293.3 810.0,330.0 C815.0,366.7 808.3,415.0 800.0,440.0 C791.7,465.0 780.0,473.3 760.0,480.0 C740.0,486.7 700.0,476.7 680.0,480.0 C660.0,483.3 651.7,480.0 640.0,500.0 C628.3,520.0 620.0,570.0 610.0,600.0 C600.0,630.0 595.0,662.5 580.0,680.0 C565.0,697.5 543.3,700.0 520.0,705.0 C496.7,710.0 471.7,712.5 440.0,710.0 C408.3,707.5 363.3,701.7 330.0,690.0 C296.7,678.3 261.7,661.7 240.0,640.0 C218.3,618.3 215.0,588.3 200.0,560.0 C185.0,531.7 156.7,500.0 150.0,470.0 C143.3,440.0 146.7,408.3 160.0,380.0 C173.3,351.7 201.7,321.7 230.0,300.0 C258.3,278.3 306.7,268.3 330.0,250.0 C353.3,231.7 346.7,210.0 370.0,190.0 C393.3,170.0 433.3,144.2 470.0,130.0 C506.7,115.8 551.7,103.3 590.0,105.0Z" fill="#efe1c2"/>
<g clip-path="url(#c3)">
<g filter="url(#r1b2)">
<ellipse cx="620" cy="230" rx="120" ry="90" fill="#f8eed6"/>
<ellipse cx="330" cy="430" rx="110" ry="110" fill="#f7ecd2"/>
<ellipse cx="560" cy="560" rx="80" ry="120" fill="#bfa97e" opacity="0.85"/>
<ellipse cx="760" cy="400" rx="50" ry="100" fill="#d4c098" opacity="0.8"/>
<ellipse cx="250" cy="620" rx="80" ry="50" fill="#cdb990" opacity="0.7"/>
</g>
<g filter="url(#r1b1)">
<ellipse cx="500" cy="370" rx="62" ry="56" fill="#4e3a28"/>
<ellipse cx="225" cy="482" rx="36" ry="42" fill="#5a4026" transform="rotate(-30 225 482)"/>
<path d="M560,400 Q640,380 690,430 Q660,470 600,440Z" fill="#6b563c"/>
<path d="M640,500 Q560,560 520,700" stroke="#3a2c20" stroke-width="12" fill="none" opacity="0.8"/>
</g></g>
<path d="M590.0,105.0 C628.3,106.7 670.0,120.8 700.0,140.0 C730.0,159.2 751.7,188.3 770.0,220.0 C788.3,251.7 805.0,293.3 810.0,330.0 C815.0,366.7 808.3,415.0 800.0,440.0 C791.7,465.0 780.0,473.3 760.0,480.0 C740.0,486.7 700.0,476.7 680.0,480.0 C660.0,483.3 651.7,480.0 640.0,500.0 C628.3,520.0 620.0,570.0 610.0,600.0 C600.0,630.0 595.0,662.5 580.0,680.0 C565.0,697.5 543.3,700.0 520.0,705.0 C496.7,710.0 471.7,712.5 440.0,710.0 C408.3,707.5 363.3,701.7 330.0,690.0 C296.7,678.3 261.7,661.7 240.0,640.0 C218.3,618.3 215.0,588.3 200.0,560.0 C185.0,531.7 156.7,500.0 150.0,470.0 C143.3,440.0 146.7,408.3 160.0,380.0 C173.3,351.7 201.7,321.7 230.0,300.0 C258.3,278.3 306.7,268.3 330.0,250.0 C353.3,231.7 346.7,210.0 370.0,190.0 C393.3,170.0 433.3,144.2 470.0,130.0 C506.7,115.8 551.7,103.3 590.0,105.0Z" fill="none" stroke="#2e2218" stroke-width="15" opacity="0.92"/>
</g>
<g transform="translate(513,720) scale(0.10832)">
<path d="M1090.0,165.0 C1066.7,165.0 1035.0,179.2 1000.0,200.0 C965.0,220.8 921.7,255.0 880.0,290.0 C838.3,325.0 793.3,368.3 750.0,410.0 C706.7,451.7 665.0,493.3 620.0,540.0 C575.0,586.7 525.0,638.3 480.0,690.0 C435.0,741.7 386.7,803.3 350.0,850.0 C313.3,896.7 285.0,931.7 260.0,970.0 C235.0,1008.3 208.3,1054.2 200.0,1080.0 C191.7,1105.8 203.7,1120.3 210.0,1125.0 C216.3,1129.7 226.0,1124.5 238.0,1108.0 C250.0,1091.5 262.0,1055.3 282.0,1026.0 C302.0,996.7 326.3,969.7 358.0,932.0 C389.7,894.3 434.0,838.7 472.0,800.0 C510.0,761.3 543.7,733.3 586.0,700.0 C628.3,666.7 678.3,633.3 726.0,600.0 C773.7,566.7 825.5,532.5 872.0,500.0 C918.5,467.5 972.8,433.3 1005.0,405.0 C1037.2,376.7 1044.2,355.8 1065.0,330.0 C1085.8,304.2 1117.5,271.7 1130.0,250.0 C1142.5,228.3 1146.7,214.2 1140.0,200.0 C1133.3,185.8 1113.3,165.0 1090.0,165.0Z" fill="url(#tuskG)" stroke="#4a3f2a" stroke-width="9" stroke-linejoin="round"/>
<path d="M1090,168 Q900,270 620,540 Q350,840 202,1085" fill="none" stroke="#2a2316" stroke-width="22" opacity="0.9" filter="url(#r1b05)"/>
<path d="M1060,300 Q1020,340 940,350" stroke="#8d7a48" stroke-width="16" fill="none" opacity="0.7" filter="url(#r1b05)"/>
</g>
<!-- row1_scars -->
<defs>
<filter id="scb1" x="-40%" y="-40%" width="180%" height="180%"><feGaussianBlur stdDeviation="5.3322"/></filter>
<filter id="scb2" x="-40%" y="-40%" width="180%" height="180%"><feGaussianBlur stdDeviation="24.8836"/></filter>
<filter id="scb3" x="-40%" y="-40%" width="180%" height="180%"><feGaussianBlur stdDeviation="31.1045"/></filter>
<filter id="scb05" x="-40%" y="-40%" width="180%" height="180%"><feGaussianBlur stdDeviation="2.6661"/></filter>
<clipPath id="sc1"><rect x="128" y="145" width="972" height="950" rx="40"/></clipPath>
<linearGradient id="mzG" x1="0" y1="0" x2="0" y2="1"><stop offset="0" stop-color="#e1452c"/><stop offset="0.22" stop-color="#d8705e"/><stop offset="0.55" stop-color="#a4645c"/><stop offset="0.8" stop-color="#9c5a62"/><stop offset="1" stop-color="#b54a48"/></linearGradient>
<clipPath id="sc2"><rect x="128" y="145" width="972" height="950" rx="40"/></clipPath>
<linearGradient id="llG" x1="0" y1="0" x2="0" y2="1"><stop offset="0" stop-color="#e2472b"/><stop offset="0.2" stop-color="#de6e58"/><stop offset="0.4" stop-color="#d09888"/><stop offset="0.7" stop-color="#c4b0a2"/><stop offset="1" stop-color="#d49a88"/></linearGradient>
<clipPath id="sc3"><rect x="128" y="145" width="972" height="950" rx="40"/></clipPath>
<linearGradient id="rlG" x1="0" y1="0" x2="0" y2="1"><stop offset="0" stop-color="#e3472a"/><stop offset="0.22" stop-color="#dc7458"/><stop offset="0.45" stop-color="#d09880"/><stop offset="0.8" stop-color="#d08a74"/><stop offset="1" stop-color="#cc5a48"/></linearGradient>
</defs>
<g transform="translate(673,720) scale(0.11252)"><g clip-path="url(#sc1)">
<rect x="130" y="150" width="970" height="950" fill="url(#mzG)"/>
<g filter="url(#scb2)">
<ellipse cx="640" cy="480" rx="250" ry="230" fill="#e6d6c6"/>
<ellipse cx="700" cy="330" rx="260" ry="90" fill="#e0a696" opacity="0.9"/>
<ellipse cx="760" cy="640" rx="110" ry="110" fill="#d9d2c6"/>
<ellipse cx="800" cy="930" rx="330" ry="130" fill="#8c82b4"/>
<ellipse cx="620" cy="1000" rx="200" ry="70" fill="#8a6a94" opacity="0.8"/>
<ellipse cx="260" cy="620" rx="130" ry="180" fill="#a2665c" opacity="0.9"/>
<ellipse cx="250" cy="960" rx="130" ry="120" fill="#bb4e4c" opacity="0.9"/>
<path d="M860,520 L1060,420 L1100,860 L1010,880 L940,780 L850,800 L820,700Z" fill="#6f5148"/>
<ellipse cx="1040" cy="780" rx="50" ry="90" fill="#b0746a" opacity="0.8"/>
</g>
<g filter="url(#scb1)">
<ellipse cx="525" cy="655" rx="118" ry="108" fill="#3d2422"/>
<ellipse cx="500" cy="640" rx="70" ry="50" fill="#6a4440" opacity="0.8"/>
<path d="M480,460 L560,540 L620,640 L650,740 L600,720 L560,620 L520,540Z" fill="#6a1f1c"/>
<path d="M230,300 Q330,420 400,520 Q400,640 440,720 Q520,800 640,810 Q760,760 830,640" fill="none" stroke="#33201c" stroke-width="12" opacity="0.8"/>
<path d="M440,730 Q530,810 650,815" fill="none" stroke="#e8e0d8" stroke-width="12" opacity="0.8"/>
</g>
<g filter="url(#scb05)"><path d="M719,527l-13,87M775,592l15,63M873,494l-9,47M645,349l-1,70M426,338l10,86M788,317l-7,48M716,306l21,82M521,338l-20,82M559,606l-1,75M518,599l-8,89M849,368l4,50M490,283l7,71M422,504l5,57M813,433l6,65M758,281l-10,42M780,564l19,78M596,468l11,43M507,604l12,78M866,599l5,59M672,539l15,77M803,569l20,86M464,383l-5,87M583,593l-1,57M572,324l10,48M751,619l8,44M894,452l3,54M705,557l1,63M447,590l15,64M822,307l-10,88M723,544l12,62M492,564l7,64M900,567l-15,62M654,523l1,56M614,313l6,90M881,486l0,59M463,358l-12,84M593,543l-10,75M739,533l5,76M555,435l-10,75M561,600l-5,70M426,457l9,74M642,554l-6,81M587,492l-10,82M588,563l-14,74M889,604l-1,68M500,561l-14,64M752,519l-6,50M795,469l-5,62M719,539l-5,77M433,318l2,74M525,507l-3,44M646,341l11,47M572,325l7,43M643,397l-4,71M534,585l15,60M554,408l16,81M599,273l-3,47M682,382l-4,89M813,411l-11,73M597,311l-3,70" stroke="#fff4ea" stroke-width="7" opacity="0.35" fill="none" stroke-linecap="round"/></g>
<g filter="url(#scb05)"><path d="M1071,847l-23,55M1057,460l-7,69M995,516l-34,79M943,633l-9,56M1074,612l-49,71M991,564l-38,54M951,588l-38,54M923,651l-7,72M958,577l-39,72M863,673l-17,86M1032,558l-9,49M1078,577l-25,60M1002,702l-22,42M1027,580l-20,55M925,672l-18,57M1024,696l-3,54M960,827l-37,58M863,771l-20,67M1016,713l-27,82M945,617l-27,44M925,792l-6,83M1013,633l-16,79M1060,517l-21,65M969,592l-9,70M1039,487l-14,81M1034,725l-3,77M1075,859l-19,40M1045,548l-36,81M1017,514l-18,85M893,704l-14,48M997,477l-6,60M876,483l-29,73M1053,514l-16,55M992,656l-34,50M872,739l-9,72M971,824l-26,68M918,681l-14,77M974,514l-10,59M1022,532l-33,66M879,727l-4,48" stroke="#4a3630" stroke-width="7" opacity="0.45" fill="none" stroke-linecap="round"/></g>
<rect x="120" y="140" width="990" height="970" fill="#3a1410" opacity="0.10"/>
</g></g>
<g><rect x="686.3" y="735.2" width="111.6" height="109.1" fill="none" stroke="#4c221a" stroke-width="5"/><rect x="686.3" y="735.2" width="111.6" height="109.1" fill="none" stroke="#ecccc2" stroke-width="2" stroke-dasharray="31 1.1 19 1.3 43 1.1 25 1.2"/><path d="M687.8,732.2 L682.1,737.2 M683.8,739.8 L688.8,733.6 M691.9,735.6 L682.7,734.8" stroke="#4c221a" stroke-width="3.3" stroke-linecap="round" fill="none"/><path d="M687.8,732.2 L682.1,737.2 M683.8,739.8 L688.8,733.6 M691.9,735.6 L682.7,734.8" stroke="#ecccc2" stroke-width="1.3" stroke-linecap="round" fill="none" opacity="0.85"/><path d="M796.4,732.2 L802.1,737.2 M800.4,739.8 L795.4,733.6 M792.3,735.6 L801.5,734.8" stroke="#4c221a" stroke-width="3.3" stroke-linecap="round" fill="none"/><path d="M796.4,732.2 L802.1,737.2 M800.4,739.8 L795.4,733.6 M792.3,735.6 L801.5,734.8" stroke="#ecccc2" stroke-width="1.3" stroke-linecap="round" fill="none" opacity="0.85"/><path d="M687.8,847.3 L682.1,842.3 M683.8,839.7 L688.8,845.9 M691.9,843.9 L682.7,844.7" stroke="#4c221a" stroke-width="3.3" stroke-linecap="round" fill="none"/><path d="M687.8,847.3 L682.1,842.3 M683.8,839.7 L688.8,845.9 M691.9,843.9 L682.7,844.7" stroke="#ecccc2" stroke-width="1.3" stroke-linecap="round" fill="none" opacity="0.85"/><path d="M796.4,847.3 L802.1,842.3 M800.4,839.7 L795.4,845.9 M792.3,843.9 L801.5,844.7" stroke="#4c221a" stroke-width="3.3" stroke-linecap="round" fill="none"/><path d="M796.4,847.3 L802.1,842.3 M800.4,839.7 L795.4,845.9 M792.3,843.9 L801.5,844.7" stroke="#ecccc2" stroke-width="1.3" stroke-linecap="round" fill="none" opacity="0.85"/><circle cx="740.1" cy="733.7" r="1.8" fill="#ecccc2" stroke="#4c221a" stroke-width="0.9"/><circle cx="685.0" cy="791.8" r="1.5" fill="#ecccc2" stroke="#4c221a" stroke-width="0.9"/><circle cx="799.1" cy="803.8" r="1.5" fill="#ecccc2" stroke="#4c221a" stroke-width="0.9"/><circle cx="772.1" cy="845.6" r="1.6" fill="#ecccc2" stroke="#4c221a" stroke-width="0.9"/></g>
<g transform="translate(833,720) scale(0.11252)"><g clip-path="url(#sc2)">
<rect x="130" y="150" width="970" height="950" fill="url(#llG)"/>
<g filter="url(#scb2)">
<path d="M520,380 Q700,300 1000,360 L1060,1000 L760,1100 L620,900 L480,640 Z" fill="#c6b8aa"/>
<ellipse cx="760" cy="620" rx="200" ry="240" fill="#b9ac9e"/>
<ellipse cx="840" cy="700" rx="110" ry="140" fill="#a59a90" opacity="0.9"/>
<ellipse cx="900" cy="980" rx="180" ry="110" fill="#d59a8a" opacity="0.9"/>
<ellipse cx="1070" cy="700" rx="40" ry="260" fill="#6d2e2a"/>
</g>
<g filter="url(#scb1)">
<path d="M130,330 Q260,430 380,600 Q520,800 740,1100 L130,1100Z" fill="#e19a5c"/>
</g>
<g filter="url(#scb2)">
<ellipse cx="330" cy="720" rx="120" ry="150" fill="#e7b070" opacity="0.9"/>
<ellipse cx="230" cy="1000" rx="140" ry="100" fill="#e87a4a" opacity="0.9"/>
</g>
<g filter="url(#scb1)">
<path d="M170,360 Q300,450 400,610 Q540,820 730,1090" fill="none" stroke="#4a2420" stroke-width="22" opacity="0.9"/>
<path d="M548,318 L475,430 L424,500 L442,600 L482,692" fill="none" stroke="#5e2420" stroke-width="30" stroke-linejoin="round" stroke-linecap="round"/>
<path d="M505,470 L486,560" stroke="#6a2a26" stroke-width="18" stroke-linecap="round"/>
</g>
<g filter="url(#scb05)"><path d="M829,479l-5,75M688,897l31,83M548,413l-9,86M636,387l-10,85M947,405l4,68M642,550l4,67M721,402l-4,84M938,625l-4,77M828,730l0,70M570,325l13,48M982,661l-0,48M764,967l4,72M762,375l16,54M715,589l-4,56M652,508l18,61M642,662l35,94M712,1003l2,86M765,1009l26,81M671,806l0,57M625,319l13,51M729,1030l12,64M763,512l0,88M605,480l3,101M856,623l-6,48M552,884l8,50M805,1042l8,67M569,353l-6,75M1007,340l13,49M727,345l17,69M679,339l35,96M613,681l13,77M564,535l24,74M999,749l-3,60M529,705l10,79M716,769l1,99M680,637l-3,60M580,534l29,86M946,535l16,50M647,363l13,79M648,346l1,51M624,515l10,53M739,535l-0,79M986,791l-1,80M750,913l4,101M899,826l22,91M719,398l19,54M657,807l12,50M917,718l18,48M588,568l-6,101M838,473l11,67M692,309l7,94M898,371l6,57M889,635l-9,92M581,538l-6,74M746,631l-1,100M797,1027l4,54M943,615l35,97M537,733l13,97M724,462l14,58M812,568l-0,62M703,486l-11,94M962,764l9,55M952,668l20,54M571,838l-5,59M934,543l3,96M844,900l9,48M786,740l19,67M685,320l15,68M768,828l18,102M944,993l2,86M799,899l15,80M873,692l12,51M565,567l7,90M892,530l-6,63M892,354l-1,86M1018,973l3,95M904,758l20,74M986,479l-9,78M725,302l10,57M860,975l-7,82M721,382l2,79M892,581l-4,60M679,501l6,98M607,775l-1,61M553,724l-4,97M899,613l12,77M990,527l19,80M1023,440l19,51M813,753l16,56M829,785l2,89M552,664l-5,101M686,938l5,100M639,823l-4,75M572,445l15,51M599,762l28,86M903,912l-3,88M1001,1018l6,102M574,377l20,56M715,644l3,90M564,602l7,69M581,748l16,85M778,1022l-5,52M915,841l12,53M769,566l0,99M719,518l11,86M930,732l15,65M961,689l24,67M644,800l21,60M570,658l-9,78M721,1000l22,64" stroke="#efe6dc" stroke-width="7" opacity="0.35" fill="none" stroke-linecap="round"/></g>
<g filter="url(#scb05)"><path d="M515,503l25,45M157,640l33,40M383,530l57,51M349,764l38,29M580,885l24,30M327,936l40,46M556,861l21,31M161,931l48,55M522,1013l53,57M490,999l53,44M340,1044l16,42M340,652l31,37M450,569l42,36M183,713l31,66M238,510l35,68M420,576l55,50M572,517l41,35M270,922l47,50M218,790l25,61M191,562l29,43M316,768l45,62M258,818l43,40M479,575l41,51M154,932l38,43M425,944l46,34M167,716l26,27M284,752l41,63M317,797l39,65M577,1053l31,30M569,543l43,51M388,718l20,44M398,965l39,32M372,817l41,36M177,549l29,30M585,647l50,48M484,647l28,55M325,852l35,32M544,746l18,39M212,529l30,51M154,524l26,50M542,522l24,33M475,842l26,37M577,562l52,39M192,537l40,49M551,904l50,38M530,567l23,41M284,501l28,50M556,761l35,29M269,1030l30,26M309,544l41,47M443,598l44,36M459,750l44,60M215,650l37,46M555,811l29,45M503,968l29,28M267,700l20,43M433,859l16,38M496,688l49,38M530,826l62,45M323,856l24,40" stroke="#f6c890" stroke-width="6" opacity="0.35" fill="none" stroke-linecap="round"/></g>
<rect x="120" y="140" width="990" height="970" fill="#3a1410" opacity="0.08"/>
</g></g>
<g><rect x="846.3" y="735.2" width="111.6" height="109.1" fill="none" stroke="#4c221a" stroke-width="5"/><rect x="846.3" y="735.2" width="111.6" height="109.1" fill="none" stroke="#ecccc2" stroke-width="2" stroke-dasharray="31 1.1 19 1.3 43 1.1 25 1.2"/><path d="M847.8,732.2 L842.1,737.2 M843.8,739.8 L848.8,733.6 M851.9,735.6 L842.7,734.8" stroke="#4c221a" stroke-width="3.3" stroke-linecap="round" fill="none"/><path d="M847.8,732.2 L842.1,737.2 M843.8,739.8 L848.8,733.6 M851.9,735.6 L842.7,734.8" stroke="#ecccc2" stroke-width="1.3" stroke-linecap="round" fill="none" opacity="0.85"/><path d="M956.4,732.2 L962.1,737.2 M960.4,739.8 L955.4,733.6 M952.3,735.6 L961.5,734.8" stroke="#4c221a" stroke-width="3.3" stroke-linecap="round" fill="none"/><path d="M956.4,732.2 L962.1,737.2 M960.4,739.8 L955.4,733.6 M952.3,735.6 L961.5,734.8" stroke="#ecccc2" stroke-width="1.3" stroke-linecap="round" fill="none" opacity="0.85"/><path d="M847.8,847.3 L842.1,842.3 M843.8,839.7 L848.8,845.9 M851.9,843.9 L842.7,844.7" stroke="#4c221a" stroke-width="3.3" stroke-linecap="round" fill="none"/><path d="M847.8,847.3 L842.1,842.3 M843.8,839.7 L848.8,845.9 M851.9,843.9 L842.7,844.7" stroke="#ecccc2" stroke-width="1.3" stroke-linecap="round" fill="none" opacity="0.85"/><path d="M956.4,847.3 L962.1,842.3 M960.4,839.7 L955.4,845.9 M952.3,843.9 L961.5,844.7" stroke="#4c221a" stroke-width="3.3" stroke-linecap="round" fill="none"/><path d="M956.4,847.3 L962.1,842.3 M960.4,839.7 L955.4,845.9 M952.3,843.9 L961.5,844.7" stroke="#ecccc2" stroke-width="1.3" stroke-linecap="round" fill="none" opacity="0.85"/><circle cx="900.1" cy="733.7" r="1.8" fill="#ecccc2" stroke="#4c221a" stroke-width="0.9"/><circle cx="845.0" cy="791.8" r="1.5" fill="#ecccc2" stroke="#4c221a" stroke-width="0.9"/><circle cx="959.1" cy="803.8" r="1.5" fill="#ecccc2" stroke="#4c221a" stroke-width="0.9"/><circle cx="932.1" cy="845.6" r="1.6" fill="#ecccc2" stroke="#4c221a" stroke-width="0.9"/></g>
<g transform="translate(993,720) scale(0.11252)"><g clip-path="url(#sc3)">
<rect x="130" y="150" width="970" height="950" fill="url(#rlG)"/>
<g filter="url(#scb2)">
<ellipse cx="480" cy="680" rx="300" ry="250" fill="#d8c8aa"/>
<ellipse cx="620" cy="640" rx="150" ry="160" fill="#e2d6bc"/>
<ellipse cx="820" cy="330" rx="220" ry="90" fill="#d8a88c" opacity="0.8"/>
<ellipse cx="250" cy="960" rx="130" ry="110" fill="#cc6656" opacity="0.9"/>
<ellipse cx="1040" cy="930" rx="70" ry="120" fill="#d4642e"/>
<ellipse cx="1040" cy="520" rx="60" ry="160" fill="#d8a090" opacity="0.9"/>
</g>
<g filter="url(#scb1)">
<path d="M800,480 Q900,440 960,470 Q1020,620 1040,760 Q1000,900 960,1000 Q860,1080 740,1040 Q690,960 720,880 Q800,780 810,640Z" fill="#6f5d56"/>
<path d="M740,900 Q800,1000 960,1000 Q860,1080 740,1040 Q690,960 740,900Z" fill="#4a2c26"/>
<path d="M440,420 Q600,430 700,450 Q800,520 810,640 Q800,780 720,880" fill="none" stroke="#3a2a26" stroke-width="12" opacity="0.8"/>
<path d="M630,585 Q700,540 790,548" fill="none" stroke="#7a1f2a" stroke-width="14"/>
</g>
<g filter="url(#scb05)"><path d="M417,611l-37,36M596,658l-49,16M355,524l-89,25M700,714l-51,50M311,436l-56,31M243,717l-97,28M450,480l-51,20M492,469l-76,19M434,578l-89,50M428,541l-86,51M401,788l-63,19M650,727l-37,35M725,690l-83,54M513,710l-70,56M329,693l-76,31M258,538l-81,37M240,999l-42,40M232,679l-86,43M275,825l-57,57M326,627l-61,64M251,863l-65,48M551,703l-95,31M344,614l-53,17M424,660l-53,14M560,859l-44,19M727,601l-80,28M424,906l-61,28M604,713l-75,33M642,512l-41,25M639,867l-48,17M490,698l-43,41M745,915l-72,61M558,643l-55,27M339,426l-73,35M611,712l-54,36M606,636l-80,42M438,818l-43,45M668,506l-34,35M624,482l-61,39M646,696l-43,25M641,865l-85,43M536,835l-78,27M192,933l-57,15M218,617l-49,48M232,548l-48,54M354,843l-47,33M733,939l-55,25M414,682l-41,28M444,865l-88,40M576,862l-94,31M640,661l-77,37M692,834l-49,32M370,565l-83,38M291,729l-65,23M235,771l-45,33M347,424l-52,49M241,423l-89,50M664,609l-50,15M267,424l-57,59M619,697l-69,26M713,773l-50,29M427,675l-57,21M351,894l-54,56M307,806l-47,25M604,656l-76,58M632,600l-50,23M481,468l-89,44M549,444l-64,38M437,508l-57,46M221,811l-49,41M233,596l-62,18M236,621l-51,14M379,541l-67,31M237,920l-69,52M443,926l-42,44M346,573l-72,26M381,714l-75,26M442,801l-63,32M427,496l-81,53M357,632l-72,37M282,679l-46,20M243,858l-49,15M227,783l-66,53M200,685l-49,45M582,716l-90,31M539,912l-55,50M365,782l-70,68M395,875l-97,27M406,917l-54,13M614,842l-54,34M281,659l-68,20M328,779l-69,45M444,586l-64,69M562,561l-69,42M472,943l-61,24M376,775l-74,68M206,710l-60,49M206,550l-89,23M308,685l-37,40M291,991l-49,38M218,484l-87,22M714,905l-58,23M278,577l-40,42M598,705l-44,48M673,914l-82,35M709,743l-66,46M344,441l-57,47M250,467l-53,44M735,702l-85,30M524,607l-54,37" stroke="#f4ecd8" stroke-width="7" opacity="0.35" fill="none" stroke-linecap="round"/></g>
<g filter="url(#scb05)"><path d="M920,913l-27,49M813,524l-20,49M781,659l-9,51M926,789l-15,76M825,944l-7,71M935,857l-27,80M918,838l-4,51M882,771l-7,78M856,739l-28,78M846,777l-28,68M849,648l-22,68M922,582l-20,66M823,567l-24,36M890,656l-3,55M816,704l-25,39M857,840l-17,40M830,649l-34,54M837,741l-16,47M927,852l-21,65M950,960l-17,41M891,825l-17,74M861,804l-29,69M984,846l-34,69M831,802l-18,41M946,624l-22,64M939,872l-27,84M877,781l-34,47M937,960l-6,80M923,768l-41,74M812,744l-30,70M991,889l-23,39M874,940l-44,65M853,874l-25,70M920,918l-40,80M889,747l-29,63M791,961l-15,65M789,608l-31,46M846,893l-13,74M905,932l-18,55M837,687l-1,48" stroke="#94847c" stroke-width="7" opacity="0.4" fill="none" stroke-linecap="round"/></g>
<rect x="120" y="140" width="990" height="970" fill="#3a1410" opacity="0.08"/>
</g></g>
<g><rect x="1006.3" y="735.2" width="111.6" height="109.1" fill="none" stroke="#4c221a" stroke-width="5"/><rect x="1006.3" y="735.2" width="111.6" height="109.1" fill="none" stroke="#ecccc2" stroke-width="2" stroke-dasharray="31 1.1 19 1.3 43 1.1 25 1.2"/><path d="M1007.8,732.2 L1002.1,737.2 M1003.8,739.8 L1008.8,733.6 M1011.9,735.6 L1002.7,734.8" stroke="#4c221a" stroke-width="3.3" stroke-linecap="round" fill="none"/><path d="M1007.8,732.2 L1002.1,737.2 M1003.8,739.8 L1008.8,733.6 M1011.9,735.6 L1002.7,734.8" stroke="#ecccc2" stroke-width="1.3" stroke-linecap="round" fill="none" opacity="0.85"/><path d="M1116.4,732.2 L1122.1,737.2 M1120.4,739.8 L1115.4,733.6 M1112.3,735.6 L1121.5,734.8" stroke="#4c221a" stroke-width="3.3" stroke-linecap="round" fill="none"/><path d="M1116.4,732.2 L1122.1,737.2 M1120.4,739.8 L1115.4,733.6 M1112.3,735.6 L1121.5,734.8" stroke="#ecccc2" stroke-width="1.3" stroke-linecap="round" fill="none" opacity="0.85"/><path d="M1007.8,847.3 L1002.1,842.3 M1003.8,839.7 L1008.8,845.9 M1011.9,843.9 L1002.7,844.7" stroke="#4c221a" stroke-width="3.3" stroke-linecap="round" fill="none"/><path d="M1007.8,847.3 L1002.1,842.3 M1003.8,839.7 L1008.8,845.9 M1011.9,843.9 L1002.7,844.7" stroke="#ecccc2" stroke-width="1.3" stroke-linecap="round" fill="none" opacity="0.85"/><path d="M1116.4,847.3 L1122.1,842.3 M1120.4,839.7 L1115.4,845.9 M1112.3,843.9 L1121.5,844.7" stroke="#4c221a" stroke-width="3.3" stroke-linecap="round" fill="none"/><path d="M1116.4,847.3 L1122.1,842.3 M1120.4,839.7 L1115.4,845.9 M1112.3,843.9 L1121.5,844.7" stroke="#ecccc2" stroke-width="1.3" stroke-linecap="round" fill="none" opacity="0.85"/><circle cx="1060.1" cy="733.7" r="1.8" fill="#ecccc2" stroke="#4c221a" stroke-width="0.9"/><circle cx="1005.0" cy="791.8" r="1.5" fill="#ecccc2" stroke="#4c221a" stroke-width="0.9"/><circle cx="1119.1" cy="803.8" r="1.5" fill="#ecccc2" stroke="#4c221a" stroke-width="0.9"/><circle cx="1092.1" cy="845.6" r="1.6" fill="#ecccc2" stroke="#4c221a" stroke-width="0.9"/></g>
<!-- row2_scroll -->
<defs>
<filter id="sb1" x="-40%" y="-40%" width="180%" height="180%"><feGaussianBlur stdDeviation="4.4435"/></filter>
<filter id="sb2" x="-40%" y="-40%" width="180%" height="180%"><feGaussianBlur stdDeviation="13.3305"/></filter>
<filter id="sb3" x="-40%" y="-40%" width="180%" height="180%"><feGaussianBlur stdDeviation="28.4384"/></filter>
<filter id="sb05" x="-40%" y="-40%" width="180%" height="180%"><feGaussianBlur stdDeviation="2.6661"/></filter>
<clipPath id="sc1"><path d="M290.0,210.0 C313.3,191.7 395.0,200.0 450.0,190.0 C505.0,180.0 571.7,160.8 620.0,150.0 C668.3,139.2 705.0,121.7 740.0,125.0 C775.0,128.3 808.3,144.2 830.0,170.0 C851.7,195.8 858.3,238.3 870.0,280.0 C881.7,321.7 885.0,373.3 900.0,420.0 C915.0,466.7 933.3,513.3 960.0,560.0 C986.7,606.7 1038.3,660.0 1060.0,700.0 C1081.7,740.0 1093.3,771.7 1090.0,800.0 C1086.7,828.3 1071.7,853.3 1040.0,870.0 C1008.3,886.7 946.7,885.0 900.0,900.0 C853.3,915.0 801.7,936.7 760.0,960.0 C718.3,983.3 680.0,1021.7 650.0,1040.0 C620.0,1058.3 601.7,1066.7 580.0,1070.0 C558.3,1073.3 538.3,1070.0 520.0,1060.0 C501.7,1050.0 476.7,1026.7 470.0,1010.0 C463.3,993.3 468.3,973.3 480.0,960.0 C491.7,946.7 540.0,951.7 540.0,930.0 C540.0,908.3 503.3,865.0 480.0,830.0 C456.7,795.0 425.0,758.3 400.0,720.0 C375.0,681.7 346.7,636.7 330.0,600.0 C313.3,563.3 301.7,533.3 300.0,500.0 C298.3,466.7 318.3,433.3 320.0,400.0 C321.7,366.7 315.0,331.7 310.0,300.0 C305.0,268.3 266.7,228.3 290.0,210.0Z"/></clipPath>
</defs>
<g transform="translate(30,1000) scale(0.11252)">
<g filter="url(#sb3)" opacity="0.8"><path d="M290.0,210.0 C313.3,191.7 395.0,200.0 450.0,190.0 C505.0,180.0 571.7,160.8 620.0,150.0 C668.3,139.2 705.0,121.7 740.0,125.0 C775.0,128.3 808.3,144.2 830.0,170.0 C851.7,195.8 858.3,238.3 870.0,280.0 C881.7,321.7 885.0,373.3 900.0,420.0 C915.0,466.7 933.3,513.3 960.0,560.0 C986.7,606.7 1038.3,660.0 1060.0,700.0 C1081.7,740.0 1093.3,771.7 1090.0,800.0 C1086.7,828.3 1071.7,853.3 1040.0,870.0 C1008.3,886.7 946.7,885.0 900.0,900.0 C853.3,915.0 801.7,936.7 760.0,960.0 C718.3,983.3 680.0,1021.7 650.0,1040.0 C620.0,1058.3 601.7,1066.7 580.0,1070.0 C558.3,1073.3 538.3,1070.0 520.0,1060.0 C501.7,1050.0 476.7,1026.7 470.0,1010.0 C463.3,993.3 468.3,973.3 480.0,960.0 C491.7,946.7 540.0,951.7 540.0,930.0 C540.0,908.3 503.3,865.0 480.0,830.0 C456.7,795.0 425.0,758.3 400.0,720.0 C375.0,681.7 346.7,636.7 330.0,600.0 C313.3,563.3 301.7,533.3 300.0,500.0 C298.3,466.7 318.3,433.3 320.0,400.0 C321.7,366.7 315.0,331.7 310.0,300.0 C305.0,268.3 266.7,228.3 290.0,210.0Z" fill="#ee94d0" stroke="#ee94d0" stroke-width="60" stroke-linejoin="round"/><circle cx="215" cy="300" r="115" fill="#ee94d0"/></g>
<ellipse cx="225" cy="300" rx="95" ry="88" fill="#4c2a2a" stroke="#3a1c20" stroke-width="10"/>
<ellipse cx="250" cy="250" rx="60" ry="30" fill="#7a5a40" opacity="0.8" filter="url(#sb1)"/>
<circle cx="215" cy="328" r="36" fill="#e38ac8"/><circle cx="208" cy="320" r="16" fill="#f6c0e6" filter="url(#sb05)"/>
<path d="M290.0,210.0 C313.3,191.7 395.0,200.0 450.0,190.0 C505.0,180.0 571.7,160.8 620.0,150.0 C668.3,139.2 705.0,121.7 740.0,125.0 C775.0,128.3 808.3,144.2 830.0,170.0 C851.7,195.8 858.3,238.3 870.0,280.0 C881.7,321.7 885.0,373.3 900.0,420.0 C915.0,466.7 933.3,513.3 960.0,560.0 C986.7,606.7 1038.3,660.0 1060.0,700.0 C1081.7,740.0 1093.3,771.7 1090.0,800.0 C1086.7,828.3 1071.7,853.3 1040.0,870.0 C1008.3,886.7 946.7,885.0 900.0,900.0 C853.3,915.0 801.7,936.7 760.0,960.0 C718.3,983.3 680.0,1021.7 650.0,1040.0 C620.0,1058.3 601.7,1066.7 580.0,1070.0 C558.3,1073.3 538.3,1070.0 520.0,1060.0 C501.7,1050.0 476.7,1026.7 470.0,1010.0 C463.3,993.3 468.3,973.3 480.0,960.0 C491.7,946.7 540.0,951.7 540.0,930.0 C540.0,908.3 503.3,865.0 480.0,830.0 C456.7,795.0 425.0,758.3 400.0,720.0 C375.0,681.7 346.7,636.7 330.0,600.0 C313.3,563.3 301.7,533.3 300.0,500.0 C298.3,466.7 318.3,433.3 320.0,400.0 C321.7,366.7 315.0,331.7 310.0,300.0 C305.0,268.3 266.7,228.3 290.0,210.0Z" fill="#d9c9a2"/>
<g clip-path="url(#sc1)">
<g filter="url(#sb2)">
<ellipse cx="420" cy="330" rx="120" ry="100" fill="#e8dcc0"/>
<ellipse cx="780" cy="200" rx="90" ry="70" fill="#b09a68" opacity="0.9"/>
<ellipse cx="400" cy="640" rx="70" ry="120" fill="#a89060" opacity="0.9"/>
<ellipse cx="1020" cy="800" rx="70" ry="80" fill="#b8a070" opacity="0.9"/>
<ellipse cx="620" cy="960" rx="110" ry="70" fill="#ae9864" opacity="0.9"/>
<ellipse cx="520" cy="1010" rx="50" ry="45" fill="#5a4030"/>
<ellipse cx="760" cy="640" rx="160" ry="160" fill="#e4d8ba" opacity="0.8"/>
</g>
<g fill="none" stroke="#e12a62" stroke-width="30" filter="url(#sb05)">
<circle cx="625" cy="355" r="80"/><circle cx="510" cy="490" r="82"/>
<path d="M700,250 Q770,300 770,400" stroke-width="24"/><path d="M790,290 Q830,340 810,420" stroke-width="20"/>
<path d="M430,380 Q380,440 400,530" stroke-width="24"/><path d="M380,400 Q350,450 365,520" stroke-width="18"/>
<path d="M690,480 L760,720 M730,470 L790,640 M770,470 L800,560 M650,520 L700,700 M610,590 L650,700" stroke-width="22"/>
</g>
<g fill="#e12a62" filter="url(#sb05)">
<circle cx="555" cy="735" r="34"/>
<circle cx="655" cy="755" r="30"/>
<circle cx="800" cy="685" r="28"/>
<circle cx="890" cy="692" r="30"/>
<circle cx="868" cy="592" r="30"/>
<circle cx="860" cy="802" r="30"/>
<circle cx="755" cy="852" r="30"/>
<circle cx="632" cy="832" r="30"/>
</g>
</g>
<path d="M290.0,210.0 C313.3,191.7 395.0,200.0 450.0,190.0 C505.0,180.0 571.7,160.8 620.0,150.0 C668.3,139.2 705.0,121.7 740.0,125.0 C775.0,128.3 808.3,144.2 830.0,170.0 C851.7,195.8 858.3,238.3 870.0,280.0 C881.7,321.7 885.0,373.3 900.0,420.0 C915.0,466.7 933.3,513.3 960.0,560.0 C986.7,606.7 1038.3,660.0 1060.0,700.0 C1081.7,740.0 1093.3,771.7 1090.0,800.0 C1086.7,828.3 1071.7,853.3 1040.0,870.0 C1008.3,886.7 946.7,885.0 900.0,900.0 C853.3,915.0 801.7,936.7 760.0,960.0 C718.3,983.3 680.0,1021.7 650.0,1040.0 C620.0,1058.3 601.7,1066.7 580.0,1070.0 C558.3,1073.3 538.3,1070.0 520.0,1060.0 C501.7,1050.0 476.7,1026.7 470.0,1010.0 C463.3,993.3 468.3,973.3 480.0,960.0 C491.7,946.7 540.0,951.7 540.0,930.0 C540.0,908.3 503.3,865.0 480.0,830.0 C456.7,795.0 425.0,758.3 400.0,720.0 C375.0,681.7 346.7,636.7 330.0,600.0 C313.3,563.3 301.7,533.3 300.0,500.0 C298.3,466.7 318.3,433.3 320.0,400.0 C321.7,366.7 315.0,331.7 310.0,300.0 C305.0,268.3 266.7,228.3 290.0,210.0Z" fill="none" stroke="#552a30" stroke-width="13"/>
</g>
<!-- row2_frames -->
<defs>
<filter id="fb1" x="-40%" y="-40%" width="180%" height="180%"><feGaussianBlur stdDeviation="5.1414"/></filter>
<filter id="fb2" x="-40%" y="-40%" width="180%" height="180%"><feGaussianBlur stdDeviation="22.279400000000003"/></filter>
<filter id="fb3" x="-40%" y="-40%" width="180%" height="180%"><feGaussianBlur stdDeviation="38.560500000000005"/></filter>
<filter id="fb05" x="-40%" y="-40%" width="180%" height="180%"><feGaussianBlur stdDeviation="2.5707"/></filter>
<clipPath id="fr1"><rect x="140" y="150" width="955" height="945" rx="30"/></clipPath>
<clipPath id="fr2"><rect x="140" y="150" width="955" height="945" rx="30"/></clipPath>
<clipPath id="fr3"><rect x="140" y="150" width="955" height="945" rx="30"/></clipPath>
<clipPath id="fr4"><rect x="140" y="150" width="955" height="945" rx="30"/></clipPath>
<clipPath id="fr5"><rect x="150" y="160" width="920" height="915" rx="60"/></clipPath>
<linearGradient id="denG" x1="0" y1="0" x2="0" y2="1"><stop offset="0" stop-color="#4e3c30"/><stop offset="0.18" stop-color="#7a695c"/><stop offset="0.45" stop-color="#aa9c8c"/><stop offset="0.75" stop-color="#d6ccba"/><stop offset="1" stop-color="#e6dece"/></linearGradient>
<linearGradient id="woodG" x1="0" y1="0" x2="1" y2="1"><stop offset="0" stop-color="#985426"/><stop offset="0.5" stop-color="#6e3614"/><stop offset="1" stop-color="#864620"/></linearGradient>
</defs>
<g transform="translate(191,966) scale(0.11670)"><g clip-path="url(#fr1)">
<rect x="130" y="140" width="980" height="970" fill="#d2a866"/>
<g filter="url(#fb2)">
<ellipse cx="360" cy="880" rx="300" ry="230" fill="#dfc080"/>
<ellipse cx="600" cy="320" rx="260" ry="150" fill="#a67c44"/>
<ellipse cx="240" cy="260" rx="110" ry="120" fill="#e2bc84"/>
<path d="M860,150 L1100,150 L1100,640 L1000,560 L880,520 L850,380Z" fill="#55301a"/>
<ellipse cx="1020" cy="760" rx="80" ry="200" fill="#a8623e"/>
<ellipse cx="940" cy="600" rx="70" ry="70" fill="#d8b088"/>
<ellipse cx="200" cy="500" rx="90" ry="110" fill="#6c6c6e"/>
<path d="M300,540 Q600,560 800,760 Q900,900 1000,1050 L800,1080 Q740,860 560,700 Q420,640 300,620Z" fill="#4a3424" opacity="0.85"/>
<ellipse cx="880" cy="960" rx="120" ry="130" fill="#b88a58"/>
</g>
<g filter="url(#fb1)">
<path d="M280,470 Q330,430 420,450 Q600,490 780,600 Q940,720 1040,960 Q1040,1000 1010,990 Q900,760 740,660 Q640,600 560,580 Q650,700 700,940 Q690,980 670,960 Q620,740 500,600 Q400,540 300,520 Q270,500 280,470Z" fill="#8c5c4a" stroke="#3e2820" stroke-width="10"/>
<path d="M320,470 Q560,500 780,640 Q920,760 1010,950" fill="none" stroke="#b48270" stroke-width="14" opacity="0.7"/>
</g>
<g filter="url(#fb05)"><path d="M404,886l26,59M434,898l51,44M500,989l45,35M209,996l23,37M690,1064l39,60M245,647l27,36M263,746l53,38M398,1011l45,58M430,931l36,43M699,1078l35,68M330,741l33,32M574,816l27,55M677,1013l43,30M652,847l23,57M199,917l27,48M207,786l30,73M224,748l35,28M590,718l38,51M263,962l57,46M223,825l41,37M684,994l61,60M274,813l32,66M214,1075l41,36M577,785l32,32M209,896l52,48M361,839l25,61M470,1021l38,32M651,1000l38,35M559,1054l67,58M636,906l31,35M181,1064l56,52M299,1002l32,46M255,957l43,32M462,1015l32,46M655,730l45,32M401,667l46,39M469,698l59,62M689,929l37,60M236,655l71,50M539,1064l60,42M420,961l64,65M201,880l43,74M558,950l41,76M350,941l35,77M385,988l31,63M497,808l42,58M203,921l31,79M553,811l36,61M398,1009l63,48M176,905l34,41M537,859l49,72M298,645l53,53M269,715l31,68M399,1032l52,53M267,830l41,77M635,809l33,47M234,858l38,75M544,1058l36,35M403,761l46,41M498,857l59,59M690,839l35,26M631,658l36,60M327,988l40,28M406,651l24,48M236,661l36,53M500,928l42,79M530,728l32,39M166,848l26,43M307,792l35,57M492,973l54,60M649,678l31,71M230,840l49,72M363,890l35,73M670,844l29,44M550,1000l43,64M275,1036l34,83M450,988l61,62M622,793l51,38M457,978l27,34M597,668l24,45M341,987l38,31M439,958l34,68M671,857l18,43M280,872l56,54M505,870l31,62M328,808l39,77M272,1014l26,63M469,728l40,53M487,652l26,62M376,992l39,53" stroke="#f0d8a0" stroke-width="6" opacity="0.4" fill="none" stroke-linecap="round"/></g>
<g filter="url(#fb05)"><path d="M712,198l9,62M839,439l20,62M441,301l-2,86M609,269l25,68M824,216l0,43M473,244l3,58M551,354l31,71M439,323l16,49M635,302l15,60M634,225l25,69M686,328l-3,72M791,245l2,82M813,268l24,84M485,460l-3,48M495,383l14,44M779,298l-0,48M573,372l23,46M708,435l-5,47M623,392l13,75M471,200l17,40M645,324l6,49M469,237l-3,90M825,207l37,80M602,394l18,62M627,300l5,42M716,416l23,60M735,293l17,47M626,184l-5,81M718,421l6,62M668,321l-10,81M504,435l2,80M771,294l-6,85M714,395l1,62M727,200l17,63M385,280l6,72M491,445l4,58M697,339l9,60M860,360l4,79M850,186l8,78M503,292l22,47M560,208l27,82M644,322l-8,69M858,359l-1,46M667,393l38,79M457,312l24,62M673,196l-6,62M633,347l14,54M694,337l23,74M522,184l14,42M455,391l20,84M739,194l-11,88M415,434l14,64M847,248l14,87M727,311l-10,81M670,212l6,64M478,195l7,48M593,367l11,54M659,297l0,68M859,447l2,54M435,430l0,73M552,256l4,70M664,357l1,51M500,454l-7,85M399,197l19,60M679,209l7,45M421,369l10,72M559,314l20,55M738,415l20,44M768,355l1,52M584,252l-1,60" stroke="#c89c5c" stroke-width="6" opacity="0.4" fill="none" stroke-linecap="round"/></g>
</g></g>
<g><rect x="205.5" y="982.3" width="114.1" height="112.6" fill="none" stroke="#4c221a" stroke-width="5"/><rect x="205.5" y="982.3" width="114.1" height="112.6" fill="none" stroke="#ecccc2" stroke-width="2" stroke-dasharray="31 1.1 19 1.3 43 1.1 25 1.2"/><path d="M207.0,979.3 L201.3,984.3 M203.0,986.9 L208.0,980.7 M211.1,982.7 L201.9,981.9" stroke="#4c221a" stroke-width="3.3" stroke-linecap="round" fill="none"/><path d="M207.0,979.3 L201.3,984.3 M203.0,986.9 L208.0,980.7 M211.1,982.7 L201.9,981.9" stroke="#ecccc2" stroke-width="1.3" stroke-linecap="round" fill="none" opacity="0.85"/><path d="M318.1,979.3 L323.8,984.3 M322.1,986.9 L317.1,980.7 M314.0,982.7 L323.2,981.9" stroke="#4c221a" stroke-width="3.3" stroke-linecap="round" fill="none"/><path d="M318.1,979.3 L323.8,984.3 M322.1,986.9 L317.1,980.7 M314.0,982.7 L323.2,981.9" stroke="#ecccc2" stroke-width="1.3" stroke-linecap="round" fill="none" opacity="0.85"/><path d="M207.0,1098.0 L201.3,1093.0 M203.0,1090.4 L208.0,1096.6 M211.1,1094.6 L201.9,1095.4" stroke="#4c221a" stroke-width="3.3" stroke-linecap="round" fill="none"/><path d="M207.0,1098.0 L201.3,1093.0 M203.0,1090.4 L208.0,1096.6 M211.1,1094.6 L201.9,1095.4" stroke="#ecccc2" stroke-width="1.3" stroke-linecap="round" fill="none" opacity="0.85"/><path d="M318.1,1098.0 L323.8,1093.0 M322.1,1090.4 L317.1,1096.6 M314.0,1094.6 L323.2,1095.4" stroke="#4c221a" stroke-width="3.3" stroke-linecap="round" fill="none"/><path d="M318.1,1098.0 L323.8,1093.0 M322.1,1090.4 L317.1,1096.6 M314.0,1094.6 L323.2,1095.4" stroke="#ecccc2" stroke-width="1.3" stroke-linecap="round" fill="none" opacity="0.85"/><circle cx="260.5" cy="980.8" r="1.8" fill="#ecccc2" stroke="#4c221a" stroke-width="0.9"/><circle cx="204.2" cy="1040.6" r="1.5" fill="#ecccc2" stroke="#4c221a" stroke-width="0.9"/><circle cx="320.8" cy="1052.6" r="1.5" fill="#ecccc2" stroke="#4c221a" stroke-width="0.9"/><circle cx="292.5" cy="1096.3" r="1.6" fill="#ecccc2" stroke="#4c221a" stroke-width="0.9"/></g>
<g transform="translate(354,966) scale(0.11670)"><g clip-path="url(#fr2)">
<rect x="130" y="140" width="980" height="970" fill="#8a8070"/>
<g filter="url(#fb2)">
<ellipse cx="800" cy="300" rx="320" ry="140" fill="#8c7f6c"/>
<ellipse cx="520" cy="250" rx="140" ry="80" fill="#2a2422"/>
<ellipse cx="250" cy="260" rx="110" ry="100" fill="#e2d3b4"/>
<ellipse cx="230" cy="440" rx="100" ry="80" fill="#3c3c3e"/>
<ellipse cx="220" cy="690" rx="100" ry="130" fill="#949cbc"/>
<path d="M130,820 Q300,760 460,900 Q700,1000 1000,1020 L1100,1110 L130,1110Z" fill="#d8a878"/>
<ellipse cx="310" cy="980" rx="50" ry="70" fill="#d2607a"/>
<ellipse cx="1000" cy="840" rx="110" ry="200" fill="#9a9080"/>
<ellipse cx="760" cy="760" rx="60" ry="60" fill="#9aa0c0"/>
</g>
<g filter="url(#fb1)">
<path d="M330,400 Q300,560 340,740 Q440,900 640,960 Q800,1020 900,1060 Q860,960 760,840 Q640,700 480,620 Q420,520 400,400Z" fill="#9c9484" stroke="#2a2420" stroke-width="12"/>
<path d="M330,640 Q380,780 540,830 Q480,740 400,640Z" fill="#f0eaea"/>
<path d="M440,620 Q560,820 820,1020" fill="none" stroke="#3a3430" stroke-width="14" opacity="0.8"/>
<path d="M450,430 Q600,380 800,430 Q940,500 1005,620 Q860,690 700,680 Q540,650 480,560 Q450,500 450,430Z" fill="#dcc4c0" stroke="#2a2220" stroke-width="12"/>
<path d="M520,440 Q660,400 800,450 Q700,470 620,520 Q560,500 520,440Z" fill="#f6f0f0"/>
<path d="M640,560 Q780,500 900,560 Q800,600 680,600Z" fill="#c4a09c" opacity="0.8"/>
<path d="M420,260 Q600,330 800,380 Q900,420 1000,520" fill="none" stroke="#2a2420" stroke-width="26" opacity="0.85"/>
</g>
<g filter="url(#fb05)"><path d="M921,417l11,68M963,401l6,60M665,390l13,44M880,296l-1,57M977,198l16,73M658,253l-3,76M750,214l11,77M789,208l-2,70M1043,406l-9,63M989,253l10,61M1050,395l12,59M788,267l7,61M710,315l-5,68M1005,315l18,77M1025,248l20,64M870,316l-12,73M990,195l4,81M659,200l-4,86M659,332l19,76M919,239l17,78M860,364l7,58M1065,341l5,68M952,350l-8,62M1000,340l-9,81M1004,393l-12,72M861,350l-5,62M813,215l-5,90M793,220l14,61M754,413l16,55M673,336l-3,51M649,290l2,87M637,206l12,51M728,352l1,53M705,247l18,77M763,312l-6,65M740,393l-8,58M872,410l4,53M643,407l-5,61M863,304l17,89M922,237l20,62M791,371l-3,72M692,218l9,54M1020,304l0,91M743,308l19,77M621,377l-8,82M658,245l-2,47M841,292l-11,70M1014,253l-5,62M1042,202l-5,52M870,306l20,80M763,255l16,55M835,352l11,75M669,275l8,89M1002,337l19,58M947,237l2,64M625,418l-4,52M903,250l9,68M757,261l9,74M738,228l-3,58M1055,315l-2,58" stroke="#b8ac98" stroke-width="6" opacity="0.4" fill="none" stroke-linecap="round"/></g>
</g></g>
<g><rect x="368.5" y="982.3" width="114.1" height="112.6" fill="none" stroke="#4c221a" stroke-width="5"/><rect x="368.5" y="982.3" width="114.1" height="112.6" fill="none" stroke="#ecccc2" stroke-width="2" stroke-dasharray="31 1.1 19 1.3 43 1.1 25 1.2"/><path d="M370.0,979.3 L364.3,984.3 M366.0,986.9 L371.0,980.7 M374.1,982.7 L364.9,981.9" stroke="#4c221a" stroke-width="3.3" stroke-linecap="round" fill="none"/><path d="M370.0,979.3 L364.3,984.3 M366.0,986.9 L371.0,980.7 M374.1,982.7 L364.9,981.9" stroke="#ecccc2" stroke-width="1.3" stroke-linecap="round" fill="none" opacity="0.85"/><path d="M481.1,979.3 L486.8,984.3 M485.1,986.9 L480.1,980.7 M477.0,982.7 L486.2,981.9" stroke="#4c221a" stroke-width="3.3" stroke-linecap="round" fill="none"/><path d="M481.1,979.3 L486.8,984.3 M485.1,986.9 L480.1,980.7 M477.0,982.7 L486.2,981.9" stroke="#ecccc2" stroke-width="1.3" stroke-linecap="round" fill="none" opacity="0.85"/><path d="M370.0,1098.0 L364.3,1093.0 M366.0,1090.4 L371.0,1096.6 M374.1,1094.6 L364.9,1095.4" stroke="#4c221a" stroke-width="3.3" stroke-linecap="round" fill="none"/><path d="M370.0,1098.0 L364.3,1093.0 M366.0,1090.4 L371.0,1096.6 M374.1,1094.6 L364.9,1095.4" stroke="#ecccc2" stroke-width="1.3" stroke-linecap="round" fill="none" opacity="0.85"/><path d="M481.1,1098.0 L486.8,1093.0 M485.1,1090.4 L480.1,1096.6 M477.0,1094.6 L486.2,1095.4" stroke="#4c221a" stroke-width="3.3" stroke-linecap="round" fill="none"/><path d="M481.1,1098.0 L486.8,1093.0 M485.1,1090.4 L480.1,1096.6 M477.0,1094.6 L486.2,1095.4" stroke="#ecccc2" stroke-width="1.3" stroke-linecap="round" fill="none" opacity="0.85"/><circle cx="423.5" cy="980.8" r="1.8" fill="#ecccc2" stroke="#4c221a" stroke-width="0.9"/><circle cx="367.2" cy="1040.6" r="1.5" fill="#ecccc2" stroke="#4c221a" stroke-width="0.9"/><circle cx="483.8" cy="1052.6" r="1.5" fill="#ecccc2" stroke="#4c221a" stroke-width="0.9"/><circle cx="455.5" cy="1096.3" r="1.6" fill="#ecccc2" stroke="#4c221a" stroke-width="0.9"/></g>
<g transform="translate(517,966) scale(0.11670)"><g clip-path="url(#fr3)">
<rect x="130" y="140" width="980" height="970" fill="#20130f"/>
<g filter="url(#fb2)">
<path d="M680,560 Q760,420 900,300 L1110,200 L1110,1110 L680,1110 Q640,900 680,560Z" fill="#bf8454"/>
<ellipse cx="1000" cy="720" rx="70" ry="110" fill="#e2b48c"/>
<ellipse cx="780" cy="940" rx="110" ry="120" fill="#d8a878"/>
<ellipse cx="800" cy="620" rx="90" ry="130" fill="#a8683c"/>
<ellipse cx="760" cy="250" rx="180" ry="110" fill="#b8966c"/>
<ellipse cx="760" cy="470" rx="70" ry="80" fill="#8a7458"/>
</g>
<g filter="url(#fb1)">
<path d="M610,380 Q800,370 940,180 L990,210 Q860,440 620,440Z" fill="#cdb088" stroke="#3a2a1e" stroke-width="10"/>
<path d="M600,440 Q480,520 360,720 Q280,820 225,885 Q400,930 600,850 Q640,700 620,560Z" fill="#d9c2a2"/>
<path d="M600,460 Q470,620 330,840 Q460,800 600,800Z" fill="#9a8268" opacity="0.7"/>
<path d="M620,430 Q680,560 640,840" fill="none" stroke="#18100c" stroke-width="40"/>
<ellipse cx="925" cy="872" rx="52" ry="42" fill="#2a1a14"/><ellipse cx="925" cy="872" rx="38" ry="30" fill="#e08a7a"/><circle cx="935" cy="875" r="13" fill="#8a3a34"/>
</g>
<g filter="url(#fb05)"><path d="M1014,554l-5,46M958,911l-8,61M1018,844l-4,53M760,572l-12,44M1050,748l-24,70M991,976l-15,56M857,509l-20,74M1073,958l-30,65M707,692l-17,72M740,719l-26,76M1014,855l-10,79M1043,818l-16,65M754,914l-39,55M972,985l-13,87M938,615l-4,54M919,904l-20,85M837,769l-9,89M752,1024l-24,65M913,653l-49,76M1011,849l-8,82M810,1020l-12,69M1016,608l-16,43M712,604l-51,72M950,678l-33,71M845,843l-21,37M776,771l-7,61M916,601l-18,52M916,693l-18,40M955,584l-41,59M879,739l-30,70M988,936l-29,86M1019,996l-17,61M915,1025l-23,64M864,1024l-10,44M976,1022l-32,64M986,677l-17,42M747,759l-20,58M720,903l-18,51M816,729l-8,45M1046,1061l-35,77M860,967l-13,78M915,1024l-7,81M747,812l-24,35M793,674l-10,44M1040,973l-16,57M922,527l-4,86M817,789l-50,75M880,620l-18,85M1041,613l-30,51M880,600l-48,77M777,867l-12,84M719,562l-26,51M1042,1004l-21,44M964,1044l-13,44M785,678l-23,46M769,637l-34,73M842,884l-38,60M787,675l-41,62M805,871l-7,90M867,806l-15,42M928,665l-15,80M733,665l-25,48M806,818l-12,85M1075,519l-24,75M846,1039l-16,48M911,874l-18,72M998,800l-27,79M960,802l-29,42M996,596l-21,49M867,948l-39,71M790,784l-11,70M890,520l-29,71M918,1006l-7,49M707,788l-18,61M800,963l-6,86M916,815l-26,47M756,680l-3,57M936,805l-13,70M734,976l-7,54M761,901l-41,70M723,738l-13,51M1069,524l-25,75M1075,584l-23,75M715,640l-26,41M849,673l-13,44M713,1078l-36,69M787,647l-19,50M875,1041l-14,57M1073,854l-3,62M947,534l-18,74" stroke="#e8bc90" stroke-width="6" opacity="0.35" fill="none" stroke-linecap="round"/></g>
</g></g>
<g><rect x="531.5" y="982.3" width="114.1" height="112.6" fill="none" stroke="#4c221a" stroke-width="5"/><rect x="531.5" y="982.3" width="114.1" height="112.6" fill="none" stroke="#ecccc2" stroke-width="2" stroke-dasharray="31 1.1 19 1.3 43 1.1 25 1.2"/><path d="M533.0,979.3 L527.3,984.3 M529.0,986.9 L534.0,980.7 M537.1,982.7 L527.9,981.9" stroke="#4c221a" stroke-width="3.3" stroke-linecap="round" fill="none"/><path d="M533.0,979.3 L527.3,984.3 M529.0,986.9 L534.0,980.7 M537.1,982.7 L527.9,981.9" stroke="#ecccc2" stroke-width="1.3" stroke-linecap="round" fill="none" opacity="0.85"/><path d="M644.1,979.3 L649.8,984.3 M648.1,986.9 L643.1,980.7 M640.0,982.7 L649.2,981.9" stroke="#4c221a" stroke-width="3.3" stroke-linecap="round" fill="none"/><path d="M644.1,979.3 L649.8,984.3 M648.1,986.9 L643.1,980.7 M640.0,982.7 L649.2,981.9" stroke="#ecccc2" stroke-width="1.3" stroke-linecap="round" fill="none" opacity="0.85"/><path d="M533.0,1098.0 L527.3,1093.0 M529.0,1090.4 L534.0,1096.6 M537.1,1094.6 L527.9,1095.4" stroke="#4c221a" stroke-width="3.3" stroke-linecap="round" fill="none"/><path d="M533.0,1098.0 L527.3,1093.0 M529.0,1090.4 L534.0,1096.6 M537.1,1094.6 L527.9,1095.4" stroke="#ecccc2" stroke-width="1.3" stroke-linecap="round" fill="none" opacity="0.85"/><path d="M644.1,1098.0 L649.8,1093.0 M648.1,1090.4 L643.1,1096.6 M640.0,1094.6 L649.2,1095.4" stroke="#4c221a" stroke-width="3.3" stroke-linecap="round" fill="none"/><path d="M644.1,1098.0 L649.8,1093.0 M648.1,1090.4 L643.1,1096.6 M640.0,1094.6 L649.2,1095.4" stroke="#ecccc2" stroke-width="1.3" stroke-linecap="round" fill="none" opacity="0.85"/><circle cx="586.5" cy="980.8" r="1.8" fill="#ecccc2" stroke="#4c221a" stroke-width="0.9"/><circle cx="530.2" cy="1040.6" r="1.5" fill="#ecccc2" stroke="#4c221a" stroke-width="0.9"/><circle cx="646.8" cy="1052.6" r="1.5" fill="#ecccc2" stroke="#4c221a" stroke-width="0.9"/><circle cx="618.5" cy="1096.3" r="1.6" fill="#ecccc2" stroke="#4c221a" stroke-width="0.9"/></g>
<g transform="translate(680,966) scale(0.11670)"><g clip-path="url(#fr4)">
<rect x="130" y="140" width="980" height="970" fill="#6e3f2a"/>
<g filter="url(#fb2)">
<path d="M130,140 L640,140 L600,500 L480,700 L130,700Z" fill="#4c1c1e"/>
<ellipse cx="330" cy="560" rx="120" ry="120" fill="#6a2024" opacity="0.8"/>
<path d="M130,680 Q300,660 440,780 Q520,900 560,1110 L130,1110Z" fill="#7c7a32"/>
<ellipse cx="300" cy="960" rx="120" ry="90" fill="#8c8a3a"/>
<ellipse cx="980" cy="700" rx="100" ry="300" fill="#7c4a30"/>
<ellipse cx="600" cy="260" rx="60" ry="100" fill="#2a1412"/>
</g>
<g filter="url(#fb1)">
<path d="M640.0,210.0 C666.7,200.0 716.7,208.3 760.0,220.0 C803.3,231.7 853.3,253.3 900.0,280.0 C946.7,306.7 1020.0,348.3 1040.0,380.0 C1060.0,411.7 1043.3,440.0 1020.0,470.0 C996.7,500.0 940.0,543.3 900.0,560.0 C860.0,576.7 816.7,580.0 780.0,570.0 C743.3,560.0 708.3,531.7 680.0,500.0 C651.7,468.3 623.3,416.7 610.0,380.0 C596.7,343.3 595.0,308.3 600.0,280.0 C605.0,251.7 613.3,220.0 640.0,210.0Z" fill="#ddd5bc" stroke="#2e241c" stroke-width="10"/>
<path d="M680.0,300.0 C696.7,285.0 753.3,313.3 800.0,330.0 C846.7,346.7 943.3,375.0 960.0,400.0 C976.7,425.0 930.0,466.7 900.0,480.0 C870.0,493.3 813.3,490.0 780.0,480.0 C746.7,470.0 716.7,450.0 700.0,420.0 C683.3,390.0 663.3,315.0 680.0,300.0Z" fill="#5a5146" opacity="0.7" filter="url(#fb1)"/>
<path d="M570.0,520.0 C586.7,513.3 651.7,570.0 700.0,600.0 C748.3,630.0 813.3,660.0 860.0,700.0 C906.7,740.0 966.7,810.0 980.0,840.0 C993.3,870.0 970.0,881.7 940.0,880.0 C910.0,878.3 843.3,853.3 800.0,830.0 C756.7,806.7 713.3,771.7 680.0,740.0 C646.7,708.3 618.3,676.7 600.0,640.0 C581.7,603.3 553.3,526.7 570.0,520.0Z" fill="#ddd5bc" stroke="#2e241c" stroke-width="10"/>
<path d="M620.0,600.0 C630.0,596.7 696.7,646.7 740.0,680.0 C783.3,713.3 873.3,785.0 880.0,800.0 C886.7,815.0 813.3,786.7 780.0,770.0 C746.7,753.3 706.7,728.3 680.0,700.0 C653.3,671.7 610.0,603.3 620.0,600.0Z" fill="#5a5146" opacity="0.7" filter="url(#fb1)"/>
<path d="M540.0,600.0 C518.3,606.7 461.7,656.7 450.0,700.0 C438.3,743.3 455.0,810.0 470.0,860.0 C485.0,910.0 511.7,961.7 540.0,1000.0 C568.3,1038.3 610.0,1090.0 640.0,1090.0 C670.0,1090.0 703.3,1038.3 720.0,1000.0 C736.7,961.7 750.0,903.3 740.0,860.0 C730.0,816.7 686.7,773.3 660.0,740.0 C633.3,706.7 600.0,683.3 580.0,660.0 C560.0,636.7 561.7,593.3 540.0,600.0Z" fill="#ddd5bc" stroke="#2e241c" stroke-width="10"/>
<path d="M560.0,720.0 C546.7,733.3 550.0,816.7 560.0,860.0 C570.0,903.3 600.0,973.3 620.0,980.0 C640.0,986.7 676.7,933.3 680.0,900.0 C683.3,866.7 660.0,810.0 640.0,780.0 C620.0,750.0 573.3,706.7 560.0,720.0Z" fill="#5a5146" opacity="0.7" filter="url(#fb1)"/>
</g>
<g filter="url(#fb05)"><path d="M471,924l3,55M301,1020l31,61M238,832l35,48M219,777l31,46M271,870l-2,65M471,778l17,35M409,838l19,31M226,800l33,67M417,802l20,38M497,837l10,66M487,708l26,45M190,1035l33,60M347,721l20,41M175,757l11,36M272,861l14,39M414,799l12,63M213,778l34,56M306,847l4,45M265,831l21,31M169,940l22,66M511,813l17,73M238,962l18,74M473,789l10,38M314,849l34,39M278,889l22,36M305,881l38,51M246,735l26,47M214,921l12,58M412,709l23,46M183,854l38,42M371,878l23,41M168,832l3,60M254,954l32,45M381,1063l28,53M499,993l16,60M308,858l37,60M477,845l2,38M209,893l26,44M512,757l26,37M405,789l41,42M302,791l23,59M357,937l22,67M509,827l35,64M273,972l14,63M507,1013l37,50M337,914l22,43M430,903l26,39M277,768l15,39M183,726l42,51M201,872l9,56M219,1029l3,38M251,893l7,52M418,796l10,49M280,989l7,70M364,860l13,61M459,1004l32,41M401,788l21,30M371,1058l-0,42M408,859l14,51M496,1076l44,49" stroke="#a8a648" stroke-width="6" opacity="0.4" fill="none" stroke-linecap="round"/></g>
</g></g>
<g><rect x="694.5" y="982.3" width="114.1" height="112.6" fill="none" stroke="#4c221a" stroke-width="5"/><rect x="694.5" y="982.3" width="114.1" height="112.6" fill="none" stroke="#ecccc2" stroke-width="2" stroke-dasharray="31 1.1 19 1.3 43 1.1 25 1.2"/><path d="M696.0,979.3 L690.3,984.3 M692.0,986.9 L697.0,980.7 M700.1,982.7 L690.9,981.9" stroke="#4c221a" stroke-width="3.3" stroke-linecap="round" fill="none"/><path d="M696.0,979.3 L690.3,984.3 M692.0,986.9 L697.0,980.7 M700.1,982.7 L690.9,981.9" stroke="#ecccc2" stroke-width="1.3" stroke-linecap="round" fill="none" opacity="0.85"/><path d="M807.1,979.3 L812.8,984.3 M811.1,986.9 L806.1,980.7 M803.0,982.7 L812.2,981.9" stroke="#4c221a" stroke-width="3.3" stroke-linecap="round" fill="none"/><path d="M807.1,979.3 L812.8,984.3 M811.1,986.9 L806.1,980.7 M803.0,982.7 L812.2,981.9" stroke="#ecccc2" stroke-width="1.3" stroke-linecap="round" fill="none" opacity="0.85"/><path d="M696.0,1098.0 L690.3,1093.0 M692.0,1090.4 L697.0,1096.6 M700.1,1094.6 L690.9,1095.4" stroke="#4c221a" stroke-width="3.3" stroke-linecap="round" fill="none"/><path d="M696.0,1098.0 L690.3,1093.0 M692.0,1090.4 L697.0,1096.6 M700.1,1094.6 L690.9,1095.4" stroke="#ecccc2" stroke-width="1.3" stroke-linecap="round" fill="none" opacity="0.85"/><path d="M807.1,1098.0 L812.8,1093.0 M811.1,1090.4 L806.1,1096.6 M803.0,1094.6 L812.2,1095.4" stroke="#4c221a" stroke-width="3.3" stroke-linecap="round" fill="none"/><path d="M807.1,1098.0 L812.8,1093.0 M811.1,1090.4 L806.1,1096.6 M803.0,1094.6 L812.2,1095.4" stroke="#ecccc2" stroke-width="1.3" stroke-linecap="round" fill="none" opacity="0.85"/><circle cx="749.5" cy="980.8" r="1.8" fill="#ecccc2" stroke="#4c221a" stroke-width="0.9"/><circle cx="693.2" cy="1040.6" r="1.5" fill="#ecccc2" stroke="#4c221a" stroke-width="0.9"/><circle cx="809.8" cy="1052.6" r="1.5" fill="#ecccc2" stroke="#4c221a" stroke-width="0.9"/><circle cx="781.5" cy="1096.3" r="1.6" fill="#ecccc2" stroke="#4c221a" stroke-width="0.9"/></g>
<g transform="translate(843,966) scale(0.11670)">
<g clip-path="url(#fr5)"><rect x="140" y="150" width="940" height="940" fill="url(#denG)"/>
<g filter="url(#fb2)"><ellipse cx="700" cy="330" rx="260" ry="60" fill="#5e4c40" opacity="0.8"/><ellipse cx="420" cy="760" rx="260" ry="60" fill="#e4dccb" opacity="0.8"/><ellipse cx="760" cy="720" rx="200" ry="40" fill="#a89a88" opacity="0.7"/><ellipse cx="560" cy="560" rx="280" ry="40" fill="#beb2a0" opacity="0.7"/></g>
<g filter="url(#fb05)"><path d="M267,294l98,22M1054,356l54,14M648,646l71,20M880,931l77,17M716,872l63,47M785,697l55,32M318,346l57,40M599,356l54,13M669,375l65,29M365,646l68,19M206,312l61,41M231,406l110,39M342,954l76,27M886,577l88,7M751,758l111,24M938,1055l101,33M812,401l64,4M267,320l98,27M439,671l67,4M1023,269l98,38M873,848l100,30M905,874l48,36M1015,582l62,32M979,279l63,26M510,555l95,45M488,770l69,19M975,517l75,8M827,429l78,42M772,402l63,7M475,605l86,5M523,517l106,41M344,964l99,24M258,1050l109,35M358,587l58,30M406,802l61,43M325,546l51,38M731,562l61,28M715,970l79,50M614,714l106,13M781,623l72,35M506,444l83,36M624,286l75,34M694,736l52,36M582,1054l65,35M823,1052l104,31M274,1052l65,23M916,779l87,61M878,669l46,35M943,829l103,21M569,689l56,36M412,775l89,8M868,653l102,20M930,877l103,41M877,381l58,16M193,537l90,57M266,405l103,30M715,981l116,11M346,763l84,54M337,795l52,17M466,512l65,30M703,816l61,10M784,633l61,8M1007,748l64,17M1055,813l68,36M439,587l93,13M542,916l79,24M616,1013l95,25M372,723l106,24M418,944l74,36M1000,570l81,44M564,311l68,21M557,1024l95,22M765,456l60,18M966,461l72,22M898,940l81,35M249,977l76,8M497,838l68,33M968,1020l94,6M582,549l70,24M764,744l93,68M1053,576l81,49M791,1058l83,7M521,785l114,21M348,556l78,11M828,327l94,14M721,854l103,21M818,881l83,10M174,948l90,64M182,541l82,32M260,891l84,20M272,714l59,8M621,495l60,34M533,303l81,15M662,628l51,32M925,384l70,51M526,750l97,62M532,269l104,15M821,830l87,13M186,348l112,26M739,938l80,6M231,469l111,13M456,651l99,47M1012,714l104,38M515,499l62,33M491,603l72,25M547,621l106,8M216,682l74,29M360,339l71,20M596,444l74,41M168,585l44,32M694,1029l88,24M492,501l83,37M444,658l95,36M208,334l70,14M876,600l67,43M417,804l115,12M908,523l103,25M869,774l102,9M203,760l104,42M735,278l83,58M682,264l71,38M772,1047l48,33M863,612l68,37M563,610l74,9M821,317l106,13M760,698l61,7M439,1023l104,42M350,592l100,39M271,959l53,18M549,562l101,49M604,812l99,29M255,854l90,14M342,537l75,11M692,676l87,25M918,547l78,33M1043,522l61,31M395,844l65,27M218,920l95,27M549,754l107,43M979,625l65,23" stroke="#f2ece0" stroke-width="7" opacity="0.3" fill="none" stroke-linecap="round"/></g>
<g filter="url(#fb05)"><path d="M838,219l104,25M192,445l82,34M460,238l83,59M885,217l59,34M339,383l56,25M848,401l93,62M780,318l81,58M422,506l62,33M384,188l65,25M424,276l84,11M405,288l84,18M946,241l91,58M708,387l77,41M754,529l61,35M209,536l100,27M370,352l96,27M1009,372l70,29M369,541l112,13M751,207l50,34M669,225l59,44M945,203l52,25M187,397l78,58M930,478l55,21M634,250l71,27M609,255l71,37M597,210l84,30M1035,393l72,10M462,447l94,66M1015,532l95,60M178,366l89,38M711,413l49,34M627,545l61,4M942,544l56,4M907,442l85,32M842,487l58,3M875,551l68,42M462,312l102,6M396,403l70,27M767,353l108,21M318,237l82,17M865,306l93,18M394,379l107,22M326,268l73,17M814,436l76,44M231,470l66,13M533,556l74,21M980,556l60,17M871,477l100,26M502,289l93,40M588,491l85,5M502,205l52,36M345,514l91,66M468,534l98,13M1011,253l96,13M954,456l67,48M495,226l111,24M224,250l55,15M436,249l87,11M646,396l76,42M1012,211l58,11M438,469l71,49M304,306l67,28M874,550l87,29M921,357l112,19M1040,189l69,39M207,242l99,15M350,187l103,19M609,428l62,21M174,296l70,5M717,320l88,31" stroke="#4a3a30" stroke-width="7" opacity="0.25" fill="none" stroke-linecap="round"/></g>
</g>
<rect x="122" y="132" width="976" height="976" rx="78" fill="none" stroke="#2e1408" stroke-width="66"/>
<rect x="122" y="132" width="976" height="976" rx="78" fill="none" stroke="url(#woodG)" stroke-width="46"/>
<g filter="url(#fb05)"><rect x="112" y="122" width="996" height="996" rx="86" fill="none" stroke="#bc7838" stroke-width="11" opacity="0.7" stroke-dasharray="220 60 140 90"/>
<path d="M600,132 Q720,90 840,100 M580,1130 Q700,1150 780,1100 M90,700 Q70,800 90,880" stroke="#8a4a20" stroke-width="30" fill="none" stroke-linecap="round"/></g>
<ellipse cx="95" cy="540" rx="24" ry="36" fill="#d89a30" stroke="#6a3a10" stroke-width="8"/>
<ellipse cx="1128" cy="255" rx="24" ry="36" fill="#d89a30" stroke="#6a3a10" stroke-width="8"/>
<ellipse cx="1125" cy="1030" rx="24" ry="36" fill="#d89a30" stroke="#6a3a10" stroke-width="8"/>
</g>
<!-- /ART -->
</svg>
<div class="t b" style="left:24px;top:36px;color:#fff;font-size:17.7px;">Walrus</div>
<div class="t b c" style="left:883.5px;top:89px;width:574px;font-size:17.7px;">Level Range: 12 - 19</div>
<div class="t b c" style="left:883.5px;top:332px;width:574px;font-size:17.7px;">Modifier Effects</div>
<div class="t c" style="left:983px;top:230.3px;width:120px;">Fearless</div>
<div class="t c" style="left:1104px;top:230.3px;width:120px;">Slow</div>
<div class="t c" style="left:1225px;top:230.3px;width:120px;">Thick Skin</div>
<div class="t b" style="left:889.4px;top:379.8px;font-size:17.7px;">Positive Modifiers</div>
<div class="t" style="left:889.4px;top:409.3px;">Retreat: +1</div>
<div class="t" style="left:889.4px;top:438.4px;">Tumble (talent move): +1</div>
<div class="t b" style="left:889.4px;top:472.8px;font-size:17.7px;">Negative Modifiers</div>
<div class="t" style="left:889.4px;top:502.3px;">Chase (opening move): -3</div>
<div class="t" style="left:889.4px;top:531.4px;">Snarl (opening move): -1</div>
<div class="t" style="left:889.4px;top:560.9px;">Shear: -1</div>
<div class="t c" style="left:992px;top:658px;width:162px;color:#8a3030;">Strength</div>
<div class="t c" style="left:1174px;top:658px;width:161px;color:#1f5f5c;">Wisdom</div>
<div class="lbl" style="left:32.7px;top:852.4px;width:141.4px;">Blubber</div>
<div class="lbl" style="left:192.5px;top:852.4px;width:141.4px;">Rugged<br>Flipper</div>
<div class="lbl" style="left:352.3px;top:852.4px;width:141.4px;">Walrus Skull</div>
<div class="lbl" style="left:512.1px;top:852.4px;width:141.4px;">Walrus Tusk</div>
<div class="lbl" style="left:671.9px;top:852.4px;width:141.4px;">Scar: Muzzle</div>
<div class="lbl" style="left:831.7px;top:852.4px;width:141.4px;">Scar: Ripped<br>Leg [Left]</div>
<div class="lbl" style="left:991.5px;top:852.4px;width:141.4px;">Scar: Ripped<br>Leg [Right]</div>
<div class="lbl" style="left:190.8px;top:1102.6px;width:143.6px;line-height:29px;">Broken Antler<br>Decor</div>
<div class="lbl" style="left:353.6px;top:1102.6px;width:143.6px;line-height:29px;">Deer Ear<br>Accessory</div>
<div class="lbl" style="left:516.4px;top:1102.6px;width:143.6px;line-height:29px;">Elk Ear<br>Accessory</div>
<div class="lbl" style="left:679.2px;top:1102.6px;width:143.6px;line-height:29px;">Moose Ear<br>Accessory</div>
<div class="lbl" style="left:842.0px;top:1102.6px;width:143.6px;line-height:29px;">Den of Pelts</div>
</body>
</html>
